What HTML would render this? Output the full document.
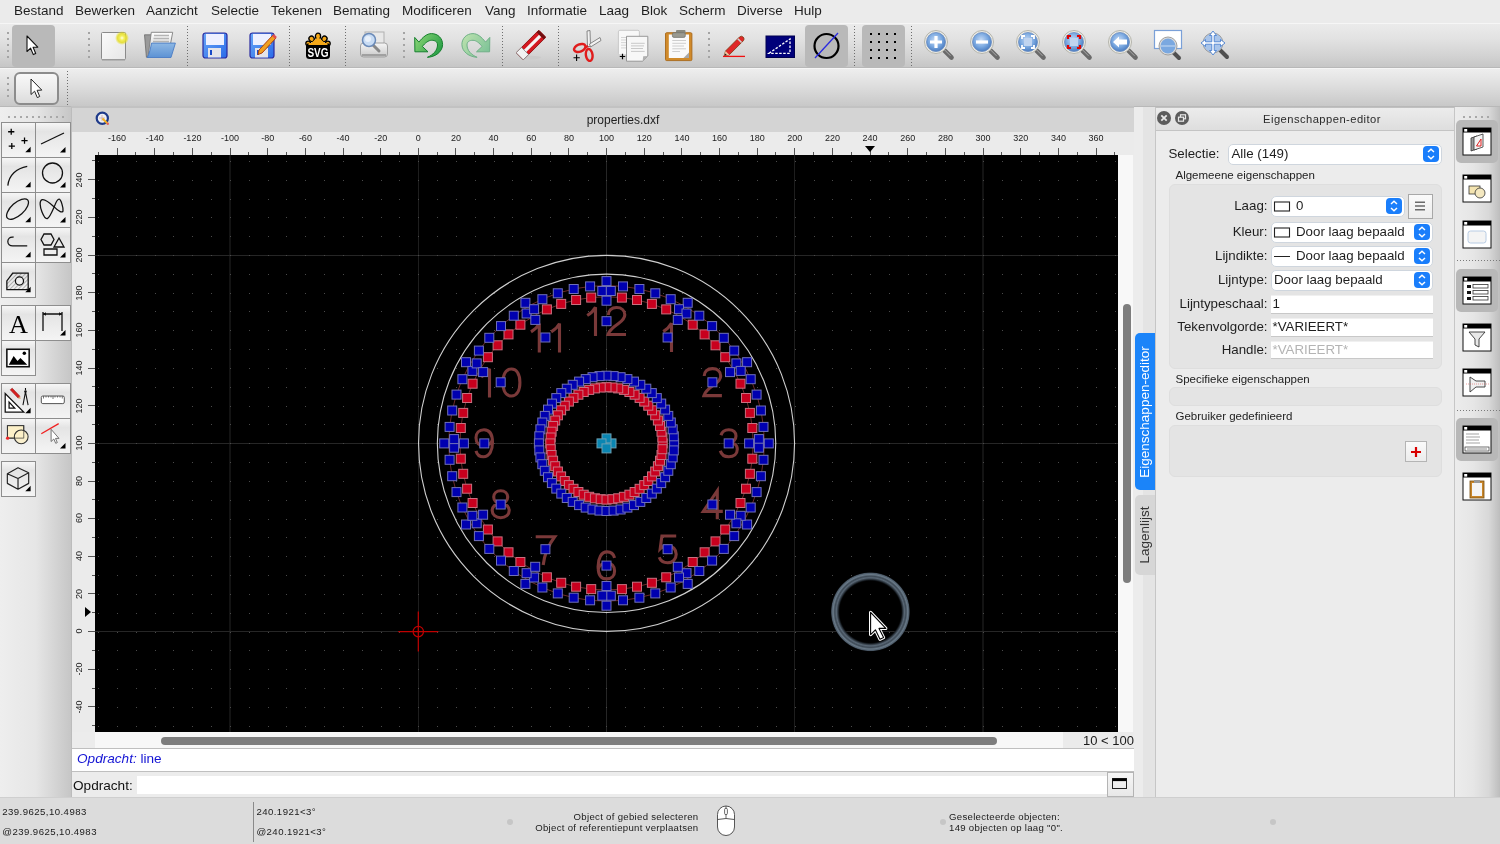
<!DOCTYPE html><html><head><meta charset="utf-8"><style>
*{margin:0;padding:0;box-sizing:border-box}
html,body{width:1500px;height:844px;overflow:hidden;background:#ececec;font-family:"Liberation Sans", sans-serif;color:#1a1a1a}
.a{position:absolute}
.menu span{position:absolute;top:2.7px;font-size:13.5px;line-height:15px;color:#1e1e1e;white-space:nowrap}
.sep{position:absolute;width:1px;border-left:1px dotted #8a8a8a}
.hd{position:absolute;width:3px;background:radial-gradient(circle,#a0a0a0 1px,transparent 1.4px) 0 0/3px 6px repeat-y}
.tb{position:absolute;width:35px;height:35px;border:1px solid #8e8e8e;background:linear-gradient(#fafafa,#e6e6e6 60%,#dcdcdc)}
.tb svg{position:absolute;left:0;top:0}
.tri{position:absolute;right:3px;bottom:3px;width:0;height:0;border-left:7px solid transparent;border-bottom:7px solid #000}
.rl{position:absolute;font-size:9px;color:#222;white-space:nowrap;text-align:center;width:40px}
.lab{position:absolute;font-size:13px;color:#1a1a1a;white-space:nowrap;text-align:right}
</style></head><body><div style="position:absolute;left:0;top:0;width:1500px;height:844px;overflow:hidden;will-change:transform"><div class="a menu" style="left:0;top:0;width:1500px;height:23px;background:#ebebeb"><span style="left:14px">Bestand</span><span style="left:75px">Bewerken</span><span style="left:146px">Aanzicht</span><span style="left:211px">Selectie</span><span style="left:271px">Tekenen</span><span style="left:333px">Bemating</span><span style="left:402px">Modificeren</span><span style="left:485px">Vang</span><span style="left:527px">Informatie</span><span style="left:599px">Laag</span><span style="left:641px">Blok</span><span style="left:679px">Scherm</span><span style="left:737px">Diverse</span><span style="left:794px">Hulp</span></div><div class="a" style="left:0;top:23px;width:1500px;height:45px;background:linear-gradient(#ebebeb,#e2e2e2 35%,#d2d2d2 75%,#c6c6c6);border-top:1px solid #f6f6f6;border-bottom:1px solid #b8b8b8"></div><div class="a" style="left:0;top:68px;width:1500px;height:39px;background:linear-gradient(#eeeeee,#dedede 45%,#c8c8c8);border-top:1px solid #f6f6f6;border-bottom:1px solid #b8b8b8"></div><div class="a" style="left:7px;top:32px;width:2px;height:2px;background:#a4a4a4"></div><div class="a" style="left:7px;top:38px;width:2px;height:2px;background:#a4a4a4"></div><div class="a" style="left:7px;top:44px;width:2px;height:2px;background:#a4a4a4"></div><div class="a" style="left:7px;top:50px;width:2px;height:2px;background:#a4a4a4"></div><div class="a" style="left:7px;top:56px;width:2px;height:2px;background:#a4a4a4"></div><div class="a" style="left:12px;top:25px;width:43px;height:42px;border-radius:4px;background:#b9b9b9"></div><svg class="a" style="left:26px;top:35px;" width="13" height="21" viewBox="0 0 13 21"><path transform="translate(1,1)" d="M0 0 L0 15.5 L3.6 12.2 L6.3 18.6 L8.7 17.5 L6.1 11.3 L10.8 11.1 Z" fill="#fff" stroke="#111" stroke-width="1.1" stroke-linejoin="round"/></svg><div class="a" style="left:88px;top:32px;width:2px;height:2px;background:#a4a4a4"></div><div class="a" style="left:88px;top:38px;width:2px;height:2px;background:#a4a4a4"></div><div class="a" style="left:88px;top:44px;width:2px;height:2px;background:#a4a4a4"></div><div class="a" style="left:88px;top:50px;width:2px;height:2px;background:#a4a4a4"></div><div class="a" style="left:88px;top:56px;width:2px;height:2px;background:#a4a4a4"></div><svg class="a" style="left:99px;top:30px;" width="30" height="32" viewBox="0 0 30 32"><defs><radialGradient id="gl"><stop offset="0" stop-color="#ffffe8"/><stop offset="0.3" stop-color="#f4f060"/><stop offset="0.65" stop-color="#e4dc20" stop-opacity="0.85"/><stop offset="1" stop-color="#e8e010" stop-opacity="0"/></radialGradient><linearGradient id="pg" x1="0" y1="0" x2="1" y2="1"><stop offset="0" stop-color="#fafafa"/><stop offset="1" stop-color="#e6e6e6"/></linearGradient></defs><rect x="2.5" y="2.5" width="24" height="27" rx="1" fill="url(#pg)" stroke="#8a8a8a" stroke-width="1"/><rect x="3" y="29" width="23" height="1.5" fill="#9a9a9a"/><circle cx="23" cy="8" r="7" fill="url(#gl)"/></svg><svg class="a" style="left:142px;top:30px;" width="36" height="31" viewBox="0 0 36 31"><defs><linearGradient id="fg" x1="0" y1="0" x2="0" y2="1"><stop offset="0" stop-color="#8eb8e4"/><stop offset="1" stop-color="#5c92d4"/></linearGradient><linearGradient id="pp" x1="0" y1="0" x2="0" y2="1"><stop offset="0" stop-color="#ffffff"/><stop offset="1" stop-color="#c4c4c4"/></linearGradient></defs><path d="M2.5 4.8 L9.5 4.8 L6.5 27.2 L4.4 27.2 Z" fill="#9a9a9a" stroke="#6a6a6a" stroke-width="0.8"/><path d="M9.3 2.3 L30.7 2.3 L28.6 13.5 L6 27 Z" fill="url(#pp)" stroke="#7e7e7e" stroke-width="0.9"/><path d="M12 5.5 H27 M11.5 8.5 H27 M11 11.5 H27" stroke="#b4b4b4" stroke-width="1.6"/><path d="M9.6 13.1 L33.4 13.1 L29 27.5 L5.2 27.5 C7.5 24 8.5 18 9.6 13.1 Z" fill="url(#fg)" stroke="#4a7cc4" stroke-width="0.9"/></svg><div class="a" style="left:187px;top:26px;width:1px;height:1px;background:#6e6e6e"></div><div class="a" style="left:187px;top:29px;width:1px;height:1px;background:#6e6e6e"></div><div class="a" style="left:187px;top:32px;width:1px;height:1px;background:#6e6e6e"></div><div class="a" style="left:187px;top:35px;width:1px;height:1px;background:#6e6e6e"></div><div class="a" style="left:187px;top:38px;width:1px;height:1px;background:#6e6e6e"></div><div class="a" style="left:187px;top:41px;width:1px;height:1px;background:#6e6e6e"></div><div class="a" style="left:187px;top:44px;width:1px;height:1px;background:#6e6e6e"></div><div class="a" style="left:187px;top:47px;width:1px;height:1px;background:#6e6e6e"></div><div class="a" style="left:187px;top:50px;width:1px;height:1px;background:#6e6e6e"></div><div class="a" style="left:187px;top:53px;width:1px;height:1px;background:#6e6e6e"></div><div class="a" style="left:187px;top:56px;width:1px;height:1px;background:#6e6e6e"></div><div class="a" style="left:187px;top:59px;width:1px;height:1px;background:#6e6e6e"></div><div class="a" style="left:187px;top:62px;width:1px;height:1px;background:#6e6e6e"></div><div class="a" style="left:187px;top:65px;width:1px;height:1px;background:#6e6e6e"></div><svg class="a" style="left:202px;top:32px;" width="27" height="28" viewBox="0 0 27 28"><defs><linearGradient id="fl" x1="0" y1="0" x2="1" y2="1"><stop offset="0" stop-color="#6aa8f8"/><stop offset="1" stop-color="#2a6ae8"/></linearGradient></defs><rect x="1" y="1" width="24" height="25" rx="2.5" fill="url(#fl)" stroke="#2a2aa0" stroke-width="1.2"/><rect x="4" y="2" width="18" height="11" fill="#eef0ff"/><rect x="6" y="16" width="13" height="9.5" fill="#e4e4ea"/><rect x="8" y="18" width="2" height="5" fill="#1a4ac8"/></svg><svg class="a" style="left:248px;top:30px;" width="30" height="30" viewBox="0 0 30 30"><g transform="translate(1,2)"><defs><linearGradient id="fl2" x1="0" y1="0" x2="1" y2="1"><stop offset="0" stop-color="#6aa8f8"/><stop offset="1" stop-color="#2a6ae8"/></linearGradient></defs><rect x="1" y="1" width="24" height="25" rx="2.5" fill="url(#fl2)" stroke="#2a2aa0" stroke-width="1.2"/><rect x="4" y="2" width="18" height="11" fill="#eef0ff"/><rect x="6" y="16" width="13" height="9.5" fill="#e4e4ea"/><rect x="8" y="18" width="2" height="5" fill="#1a4ac8"/></g><path d="M11 20 L25 5 L28 8 L14 23 L10 24.5 Z" fill="#f0a020" stroke="#b04010" stroke-width="1"/><path d="M25 5 L28 8" stroke="#e05050" stroke-width="2.5"/></svg><div class="a" style="left:289px;top:26px;width:1px;height:1px;background:#6e6e6e"></div><div class="a" style="left:289px;top:29px;width:1px;height:1px;background:#6e6e6e"></div><div class="a" style="left:289px;top:32px;width:1px;height:1px;background:#6e6e6e"></div><div class="a" style="left:289px;top:35px;width:1px;height:1px;background:#6e6e6e"></div><div class="a" style="left:289px;top:38px;width:1px;height:1px;background:#6e6e6e"></div><div class="a" style="left:289px;top:41px;width:1px;height:1px;background:#6e6e6e"></div><div class="a" style="left:289px;top:44px;width:1px;height:1px;background:#6e6e6e"></div><div class="a" style="left:289px;top:47px;width:1px;height:1px;background:#6e6e6e"></div><div class="a" style="left:289px;top:50px;width:1px;height:1px;background:#6e6e6e"></div><div class="a" style="left:289px;top:53px;width:1px;height:1px;background:#6e6e6e"></div><div class="a" style="left:289px;top:56px;width:1px;height:1px;background:#6e6e6e"></div><div class="a" style="left:289px;top:59px;width:1px;height:1px;background:#6e6e6e"></div><div class="a" style="left:289px;top:62px;width:1px;height:1px;background:#6e6e6e"></div><div class="a" style="left:289px;top:65px;width:1px;height:1px;background:#6e6e6e"></div><svg class="a" style="left:304px;top:32px;" width="28" height="28" viewBox="0 0 28 28"><g fill="#f4a818" stroke="#000" stroke-width="1.3"><ellipse cx="14" cy="4.2" rx="2.6" ry="3"/><ellipse cx="7.6" cy="6.8" rx="2.5" ry="2.8" transform="rotate(-40 7.6 6.8)"/><ellipse cx="20.4" cy="6.8" rx="2.5" ry="2.8" transform="rotate(40 20.4 6.8)"/><ellipse cx="4.2" cy="11.5" rx="2.4" ry="2.4"/><ellipse cx="23.8" cy="11.5" rx="2.4" ry="2.4"/></g><path d="M6 12 L14 5 L22 12 Z" fill="#f4a818"/><rect x="2" y="11" width="24" height="16" rx="3.5" fill="#000"/><rect x="4.5" y="11" width="19" height="2" fill="#f4a818"/><text x="14" y="25" text-anchor="middle" font-family="Liberation Sans" font-weight="bold" font-size="10" fill="#fff" transform="translate(14 25) scale(1 1.3) translate(-14 -25)">SVG</text></svg><div class="a" style="left:345px;top:26px;width:1px;height:1px;background:#6e6e6e"></div><div class="a" style="left:345px;top:29px;width:1px;height:1px;background:#6e6e6e"></div><div class="a" style="left:345px;top:32px;width:1px;height:1px;background:#6e6e6e"></div><div class="a" style="left:345px;top:35px;width:1px;height:1px;background:#6e6e6e"></div><div class="a" style="left:345px;top:38px;width:1px;height:1px;background:#6e6e6e"></div><div class="a" style="left:345px;top:41px;width:1px;height:1px;background:#6e6e6e"></div><div class="a" style="left:345px;top:44px;width:1px;height:1px;background:#6e6e6e"></div><div class="a" style="left:345px;top:47px;width:1px;height:1px;background:#6e6e6e"></div><div class="a" style="left:345px;top:50px;width:1px;height:1px;background:#6e6e6e"></div><div class="a" style="left:345px;top:53px;width:1px;height:1px;background:#6e6e6e"></div><div class="a" style="left:345px;top:56px;width:1px;height:1px;background:#6e6e6e"></div><div class="a" style="left:345px;top:59px;width:1px;height:1px;background:#6e6e6e"></div><div class="a" style="left:345px;top:62px;width:1px;height:1px;background:#6e6e6e"></div><div class="a" style="left:345px;top:65px;width:1px;height:1px;background:#6e6e6e"></div><svg class="a" style="left:358px;top:30px;" width="32" height="30" viewBox="0 0 32 30"><defs><linearGradient id="pr" x1="0" y1="0" x2="0" y2="1"><stop offset="0" stop-color="#f6f6f6"/><stop offset="1" stop-color="#c8c8c8"/></linearGradient></defs><rect x="7" y="2" width="19" height="14" fill="#e8e8e8" stroke="#b0b0b0" stroke-width="1"/><rect x="2.5" y="13" width="27" height="14" rx="3" fill="url(#pr)" stroke="#a0a0a0" stroke-width="1"/><path d="M4 25 L28 25" stroke="#909090" stroke-width="1.5"/><line x1="14" y1="14" x2="21" y2="21" stroke="#888" stroke-width="3" stroke-linecap="round"/><circle cx="11" cy="10" r="6.5" fill="#c8dcf4" stroke="#6a8ab8" stroke-width="1.5"/><circle cx="10" cy="9" r="3" fill="#e8f0fa"/></svg><div class="a" style="left:403px;top:32px;width:2px;height:2px;background:#a4a4a4"></div><div class="a" style="left:403px;top:38px;width:2px;height:2px;background:#a4a4a4"></div><div class="a" style="left:403px;top:44px;width:2px;height:2px;background:#a4a4a4"></div><div class="a" style="left:403px;top:50px;width:2px;height:2px;background:#a4a4a4"></div><div class="a" style="left:403px;top:56px;width:2px;height:2px;background:#a4a4a4"></div><svg class="a" style="left:413px;top:31px;" width="32" height="28" viewBox="0 0 32 28"><defs><linearGradient id="ug" x1="0" y1="0" x2="1" y2="0.6"><stop offset="0" stop-color="#90d878"/><stop offset="1" stop-color="#2aa048"/></linearGradient></defs><path d="M1.7 6.4 L5.9 11.1 C10 6 14 2.6 18.5 2.6 C25 2.6 29.6 7.5 29.6 13.4 C29.6 21 22 26 14.4 26.3 C20 24 24.5 19.5 24.5 14 C24.5 10.5 22 9.3 18.5 9.3 C15.5 9.3 12 12 9.4 15.5 L15 20.8 L1.9 20.8 Z" fill="url(#ug)" stroke="#16802e" stroke-width="1" stroke-linejoin="round"/></svg><svg class="a" style="left:460px;top:31px;" width="32" height="28" viewBox="0 0 32 28"><defs><linearGradient id="rg2" x1="1" y1="0" x2="0" y2="0.6"><stop offset="0" stop-color="#c0e4b0"/><stop offset="1" stop-color="#80c498"/></linearGradient></defs><g transform="translate(31.5,0) scale(-1,1)"><path d="M1.7 6.4 L5.9 11.1 C10 6 14 2.6 18.5 2.6 C25 2.6 29.6 7.5 29.6 13.4 C29.6 21 22 26 14.4 26.3 C20 24 24.5 19.5 24.5 14 C24.5 10.5 22 9.3 18.5 9.3 C15.5 9.3 12 12 9.4 15.5 L15 20.8 L1.9 20.8 Z" fill="url(#rg2)" stroke="#70b088" stroke-width="1" stroke-linejoin="round"/></g></svg><div class="a" style="left:502px;top:26px;width:1px;height:1px;background:#6e6e6e"></div><div class="a" style="left:502px;top:29px;width:1px;height:1px;background:#6e6e6e"></div><div class="a" style="left:502px;top:32px;width:1px;height:1px;background:#6e6e6e"></div><div class="a" style="left:502px;top:35px;width:1px;height:1px;background:#6e6e6e"></div><div class="a" style="left:502px;top:38px;width:1px;height:1px;background:#6e6e6e"></div><div class="a" style="left:502px;top:41px;width:1px;height:1px;background:#6e6e6e"></div><div class="a" style="left:502px;top:44px;width:1px;height:1px;background:#6e6e6e"></div><div class="a" style="left:502px;top:47px;width:1px;height:1px;background:#6e6e6e"></div><div class="a" style="left:502px;top:50px;width:1px;height:1px;background:#6e6e6e"></div><div class="a" style="left:502px;top:53px;width:1px;height:1px;background:#6e6e6e"></div><div class="a" style="left:502px;top:56px;width:1px;height:1px;background:#6e6e6e"></div><div class="a" style="left:502px;top:59px;width:1px;height:1px;background:#6e6e6e"></div><div class="a" style="left:502px;top:62px;width:1px;height:1px;background:#6e6e6e"></div><div class="a" style="left:502px;top:65px;width:1px;height:1px;background:#6e6e6e"></div><svg class="a" style="left:516px;top:30px;" width="30" height="32" viewBox="0 0 30 32"><ellipse cx="14" cy="27.5" rx="11" ry="1.8" fill="#c8c8c8" opacity="0.8"/><g transform="translate(15,15) rotate(-45)"><rect x="-16" y="-5" width="32" height="10" rx="1" fill="#d41820" stroke="#8a1010" stroke-width="0.8"/><rect x="-9" y="-1.6" width="22" height="3.2" fill="#f4f4f4"/><rect x="-16" y="-5" width="7.5" height="10" fill="#f2f2f2" stroke="#8a8a8a" stroke-width="0.8"/><rect x="13" y="-5" width="3" height="10" fill="#701010"/></g></svg><div class="a" style="left:558px;top:26px;width:1px;height:1px;background:#6e6e6e"></div><div class="a" style="left:558px;top:29px;width:1px;height:1px;background:#6e6e6e"></div><div class="a" style="left:558px;top:32px;width:1px;height:1px;background:#6e6e6e"></div><div class="a" style="left:558px;top:35px;width:1px;height:1px;background:#6e6e6e"></div><div class="a" style="left:558px;top:38px;width:1px;height:1px;background:#6e6e6e"></div><div class="a" style="left:558px;top:41px;width:1px;height:1px;background:#6e6e6e"></div><div class="a" style="left:558px;top:44px;width:1px;height:1px;background:#6e6e6e"></div><div class="a" style="left:558px;top:47px;width:1px;height:1px;background:#6e6e6e"></div><div class="a" style="left:558px;top:50px;width:1px;height:1px;background:#6e6e6e"></div><div class="a" style="left:558px;top:53px;width:1px;height:1px;background:#6e6e6e"></div><div class="a" style="left:558px;top:56px;width:1px;height:1px;background:#6e6e6e"></div><div class="a" style="left:558px;top:59px;width:1px;height:1px;background:#6e6e6e"></div><div class="a" style="left:558px;top:62px;width:1px;height:1px;background:#6e6e6e"></div><div class="a" style="left:558px;top:65px;width:1px;height:1px;background:#6e6e6e"></div><svg class="a" style="left:571px;top:28px;" width="32" height="34" viewBox="0 0 32 34"><path d="M16 3 L19 2.5 L19.5 18.5 L16.5 18.5 Z" fill="#f2f2f2" stroke="#7a7a7a" stroke-width="0.9" stroke-linejoin="round"/><path d="M18.5 16 L29 9.5 L30 12.5 L19.5 19 Z" fill="#f2f2f2" stroke="#7a7a7a" stroke-width="0.9" stroke-linejoin="round"/><ellipse cx="8.8" cy="20" rx="6" ry="3.6" fill="none" stroke="#e01c1c" stroke-width="2.4" transform="rotate(-22 8.8 20)"/><ellipse cx="18.2" cy="27" rx="3.3" ry="6" fill="none" stroke="#e01c1c" stroke-width="2.4" transform="rotate(-8 18.2 27)"/><path d="M13.5 20 L17 18" stroke="#e01c1c" stroke-width="2.4"/><path d="M2.5 29.8 L8.8 29.8 M5.6 26.6 L5.6 33" stroke="#000" stroke-width="1.1"/></svg><svg class="a" style="left:616px;top:28px;" width="34" height="36" viewBox="0 0 34 36"><rect x="2.4" y="2.3" width="21" height="24.6" rx="1.5" fill="#f8f8f8" stroke="#c4c4c4" stroke-width="0.9"/><path d="M5 9.5 H12 M5 12 H12 M5 14.6 H12 M5 17.2 H12 M5 19.9 H12" stroke="#d0d0d0" stroke-width="0.9"/><path d="M10.5 8.3 H31.8 V28 L26.6 33.2 H10.5 Z" fill="#f7f7f7" stroke="#8e8e8e" stroke-width="0.9" stroke-linejoin="round"/><path d="M26.6 33.2 L27.2 28.3 L31.8 28 Z" fill="#b0b0b0"/><path d="M15 15.3 H28.7 M15 17.9 H28 M15 20.5 H27 M15 23.4 H28.7" stroke="#c8c8c8" stroke-width="1"/><path d="M3.8 28.5 H9.2 M6.5 25.8 V31.2" stroke="#000" stroke-width="1.2"/></svg><svg class="a" style="left:663px;top:27px;" width="32" height="36" viewBox="0 0 32 36"><rect x="2.5" y="5.7" width="26.4" height="27.9" rx="1.2" fill="#d08a2a" stroke="#a86818" stroke-width="0.9"/><rect x="5.8" y="7.5" width="20.2" height="23.5" fill="#fafafa"/><path d="M9.3 13.5 H23 M9.3 16.3 H23 M9.3 19 H21 M9.3 21.8 H23 M9.3 24.5 H17" stroke="#c8c8c8" stroke-width="0.9"/><path d="M20.5 31 L26 25.5 V31 Z" fill="#a8a8a8"/><rect x="13" y="3" width="9.5" height="4" rx="1" fill="#8a8a80"/><rect x="9.4" y="5.7" width="12.9" height="4.7" rx="1.5" fill="#9a9a90" stroke="#707068" stroke-width="0.7"/></svg><div class="a" style="left:708px;top:32px;width:2px;height:2px;background:#a4a4a4"></div><div class="a" style="left:708px;top:38px;width:2px;height:2px;background:#a4a4a4"></div><div class="a" style="left:708px;top:44px;width:2px;height:2px;background:#a4a4a4"></div><div class="a" style="left:708px;top:50px;width:2px;height:2px;background:#a4a4a4"></div><div class="a" style="left:708px;top:56px;width:2px;height:2px;background:#a4a4a4"></div><svg class="a" style="left:721px;top:32px;" width="26" height="28" viewBox="0 0 26 28"><path d="M4.5 19 L18.5 5 Q20.5 3.3 22.3 5.2 Q24 7 22.3 8.8 L8.3 22.8 L3.3 24 Z" fill="#e02828" stroke="#7a3a10" stroke-width="0.8"/><path d="M16.8 6.7 L20.6 10.5" stroke="#d0d0d0" stroke-width="1.6"/><path d="M4.5 19 L8.3 22.8 L3.3 24 Z" fill="#f0c8a0"/><path d="M3.3 24 L4.2 21.4 L5.9 23.1 Z" fill="#202020"/><path d="M2 24.4 L24 24.4" stroke="#f01010" stroke-width="1.3"/></svg><svg class="a" style="left:765px;top:35px;" width="32" height="25" viewBox="0 0 32 25"><rect x="1" y="1" width="28.5" height="21.5" fill="#00007a" stroke="#000050" stroke-width="1"/><path d="M4 18.3 L25 4 L25 18.3 Z" fill="none" stroke="#fff" stroke-width="1.3" stroke-dasharray="2.5,1.5"/></svg><div class="a" style="left:805px;top:25px;width:43px;height:42px;border-radius:4px;background:#b9b9b9"></div><svg class="a" style="left:809px;top:30px;" width="36" height="32" viewBox="0 0 36 32"><circle cx="17.5" cy="16" r="12" fill="none" stroke="#000" stroke-width="2.2"/><line x1="6" y1="28" x2="29" y2="3" stroke="#2a2ae0" stroke-width="1.3"/></svg><div class="a" style="left:854px;top:26px;width:1px;height:1px;background:#6e6e6e"></div><div class="a" style="left:854px;top:29px;width:1px;height:1px;background:#6e6e6e"></div><div class="a" style="left:854px;top:32px;width:1px;height:1px;background:#6e6e6e"></div><div class="a" style="left:854px;top:35px;width:1px;height:1px;background:#6e6e6e"></div><div class="a" style="left:854px;top:38px;width:1px;height:1px;background:#6e6e6e"></div><div class="a" style="left:854px;top:41px;width:1px;height:1px;background:#6e6e6e"></div><div class="a" style="left:854px;top:44px;width:1px;height:1px;background:#6e6e6e"></div><div class="a" style="left:854px;top:47px;width:1px;height:1px;background:#6e6e6e"></div><div class="a" style="left:854px;top:50px;width:1px;height:1px;background:#6e6e6e"></div><div class="a" style="left:854px;top:53px;width:1px;height:1px;background:#6e6e6e"></div><div class="a" style="left:854px;top:56px;width:1px;height:1px;background:#6e6e6e"></div><div class="a" style="left:854px;top:59px;width:1px;height:1px;background:#6e6e6e"></div><div class="a" style="left:854px;top:62px;width:1px;height:1px;background:#6e6e6e"></div><div class="a" style="left:854px;top:65px;width:1px;height:1px;background:#6e6e6e"></div><div class="a" style="left:862px;top:25px;width:43px;height:42px;border-radius:4px;background:#b9b9b9"></div><div class="a" style="left:870px;top:33px;width:2px;height:2px;background:#000"></div><div class="a" style="left:870px;top:41px;width:2px;height:2px;background:#000"></div><div class="a" style="left:870px;top:49px;width:2px;height:2px;background:#000"></div><div class="a" style="left:870px;top:57px;width:2px;height:2px;background:#000"></div><div class="a" style="left:878px;top:33px;width:2px;height:2px;background:#000"></div><div class="a" style="left:878px;top:41px;width:2px;height:2px;background:#000"></div><div class="a" style="left:878px;top:49px;width:2px;height:2px;background:#000"></div><div class="a" style="left:878px;top:57px;width:2px;height:2px;background:#000"></div><div class="a" style="left:886px;top:33px;width:2px;height:2px;background:#000"></div><div class="a" style="left:886px;top:41px;width:2px;height:2px;background:#000"></div><div class="a" style="left:886px;top:49px;width:2px;height:2px;background:#000"></div><div class="a" style="left:886px;top:57px;width:2px;height:2px;background:#000"></div><div class="a" style="left:894px;top:33px;width:2px;height:2px;background:#000"></div><div class="a" style="left:894px;top:41px;width:2px;height:2px;background:#000"></div><div class="a" style="left:894px;top:49px;width:2px;height:2px;background:#000"></div><div class="a" style="left:894px;top:57px;width:2px;height:2px;background:#000"></div><div class="a" style="left:911px;top:26px;width:1px;height:1px;background:#6e6e6e"></div><div class="a" style="left:911px;top:29px;width:1px;height:1px;background:#6e6e6e"></div><div class="a" style="left:911px;top:32px;width:1px;height:1px;background:#6e6e6e"></div><div class="a" style="left:911px;top:35px;width:1px;height:1px;background:#6e6e6e"></div><div class="a" style="left:911px;top:38px;width:1px;height:1px;background:#6e6e6e"></div><div class="a" style="left:911px;top:41px;width:1px;height:1px;background:#6e6e6e"></div><div class="a" style="left:911px;top:44px;width:1px;height:1px;background:#6e6e6e"></div><div class="a" style="left:911px;top:47px;width:1px;height:1px;background:#6e6e6e"></div><div class="a" style="left:911px;top:50px;width:1px;height:1px;background:#6e6e6e"></div><div class="a" style="left:911px;top:53px;width:1px;height:1px;background:#6e6e6e"></div><div class="a" style="left:911px;top:56px;width:1px;height:1px;background:#6e6e6e"></div><div class="a" style="left:911px;top:59px;width:1px;height:1px;background:#6e6e6e"></div><div class="a" style="left:911px;top:62px;width:1px;height:1px;background:#6e6e6e"></div><div class="a" style="left:911px;top:65px;width:1px;height:1px;background:#6e6e6e"></div><svg class="a" style="left:922px;top:28px;" width="34" height="34" viewBox="0 0 34 34"><defs><radialGradient id="mg936" cx="45%" cy="40%" r="60%"><stop offset="0" stop-color="#c8dcf6"/><stop offset="0.6" stop-color="#7aa8e0"/><stop offset="1" stop-color="#4a7cc0"/></radialGradient></defs><line x1="21" y1="21" x2="29.5" y2="29.5" stroke="#6a6a6a" stroke-width="4.6" stroke-linecap="round"/><line x1="22.5" y1="21.8" x2="28.5" y2="27.8" stroke="#a8a8a8" stroke-width="1"/><circle cx="14" cy="14" r="11.5" fill="#ecebe4" stroke="#b4b4ac" stroke-width="1"/><circle cx="14" cy="14" r="9.5" fill="url(#mg936)" stroke="#6a8cc0" stroke-width="0.8"/><path d="M14 8 V20 M8 14 H20" stroke="#fff" stroke-width="3.2"/></svg><svg class="a" style="left:968px;top:28px;" width="34" height="34" viewBox="0 0 34 34"><defs><radialGradient id="mg982" cx="45%" cy="40%" r="60%"><stop offset="0" stop-color="#c8dcf6"/><stop offset="0.6" stop-color="#7aa8e0"/><stop offset="1" stop-color="#4a7cc0"/></radialGradient></defs><line x1="21" y1="21" x2="29.5" y2="29.5" stroke="#6a6a6a" stroke-width="4.6" stroke-linecap="round"/><line x1="22.5" y1="21.8" x2="28.5" y2="27.8" stroke="#a8a8a8" stroke-width="1"/><circle cx="14" cy="14" r="11.5" fill="#ecebe4" stroke="#b4b4ac" stroke-width="1"/><circle cx="14" cy="14" r="9.5" fill="url(#mg982)" stroke="#6a8cc0" stroke-width="0.8"/><path d="M8 14 H20" stroke="#fff" stroke-width="3.2"/></svg><svg class="a" style="left:1014px;top:28px;" width="34" height="34" viewBox="0 0 34 34"><defs><radialGradient id="mg1028" cx="45%" cy="40%" r="60%"><stop offset="0" stop-color="#c8dcf6"/><stop offset="0.6" stop-color="#7aa8e0"/><stop offset="1" stop-color="#4a7cc0"/></radialGradient></defs><line x1="21" y1="21" x2="29.5" y2="29.5" stroke="#6a6a6a" stroke-width="4.6" stroke-linecap="round"/><line x1="22.5" y1="21.8" x2="28.5" y2="27.8" stroke="#a8a8a8" stroke-width="1"/><circle cx="14" cy="14" r="11.5" fill="#ecebe4" stroke="#b4b4ac" stroke-width="1"/><circle cx="14" cy="14" r="9.5" fill="url(#mg1028)" stroke="#6a8cc0" stroke-width="0.8"/><rect x="10" y="10" width="8" height="8" fill="#c0d4f0"/><path d="M8 11 V8 H11 M17 8 H20 V11 M20 17 V20 H17 M11 20 H8 V17" fill="none" stroke="#fff" stroke-width="1.8"/></svg><svg class="a" style="left:1060px;top:28px;" width="34" height="34" viewBox="0 0 34 34"><defs><radialGradient id="mg1074" cx="45%" cy="40%" r="60%"><stop offset="0" stop-color="#c8dcf6"/><stop offset="0.6" stop-color="#7aa8e0"/><stop offset="1" stop-color="#4a7cc0"/></radialGradient></defs><line x1="21" y1="21" x2="29.5" y2="29.5" stroke="#6a6a6a" stroke-width="4.6" stroke-linecap="round"/><line x1="22.5" y1="21.8" x2="28.5" y2="27.8" stroke="#a8a8a8" stroke-width="1"/><circle cx="14" cy="14" r="11.5" fill="#ecebe4" stroke="#b4b4ac" stroke-width="1"/><circle cx="14" cy="14" r="9.5" fill="url(#mg1074)" stroke="#6a8cc0" stroke-width="0.8"/><rect x="10" y="10" width="8" height="8" fill="#c0d4f0"/><path d="M8 11 V8 H11 M17 8 H20 V11 M20 17 V20 H17 M11 20 H8 V17" fill="none" stroke="#e00000" stroke-width="2.2"/></svg><svg class="a" style="left:1106px;top:28px;" width="34" height="34" viewBox="0 0 34 34"><defs><radialGradient id="mg1120" cx="45%" cy="40%" r="60%"><stop offset="0" stop-color="#c8dcf6"/><stop offset="0.6" stop-color="#7aa8e0"/><stop offset="1" stop-color="#4a7cc0"/></radialGradient></defs><line x1="21" y1="21" x2="29.5" y2="29.5" stroke="#6a6a6a" stroke-width="4.6" stroke-linecap="round"/><line x1="22.5" y1="21.8" x2="28.5" y2="27.8" stroke="#a8a8a8" stroke-width="1"/><circle cx="14" cy="14" r="11.5" fill="#ecebe4" stroke="#b4b4ac" stroke-width="1"/><circle cx="14" cy="14" r="9.5" fill="url(#mg1120)" stroke="#6a8cc0" stroke-width="0.8"/><path d="M7 14 L13 8.5 V11.5 H21 V16.5 H13 V19.5 Z" fill="#fff"/></svg><svg class="a" style="left:1152px;top:28px;" width="34" height="34" viewBox="0 0 34 34"><rect x="2.5" y="2.5" width="27" height="18" fill="#fff" stroke="#7aa0d8" stroke-width="1.2"/><line x1="20" y1="23" x2="27" y2="30" stroke="#505050" stroke-width="4" stroke-linecap="round"/><circle cx="16" cy="18" r="9" fill="#dcdcdc" stroke="#a0a0a0"/><circle cx="16" cy="18" r="7.5" fill="#7aa8e0"/><path d="M9 18 H23" stroke="#c8dcf4" stroke-width="1"/></svg><svg class="a" style="left:1198px;top:28px;" width="34" height="34" viewBox="0 0 34 34"><line x1="21" y1="21" x2="29" y2="29" stroke="#505050" stroke-width="4" stroke-linecap="round"/><circle cx="15" cy="15" r="10" fill="#a8c4ea" stroke="#a0a0a0"/><path d="M15 3 L11.5 7.5 H13.8 V13.8 H7.5 V11.5 L3 15 L7.5 18.5 V16.2 H13.8 V22.5 H11.5 L15 27 L18.5 22.5 H16.2 V16.2 H22.5 V18.5 L27 15 L22.5 11.5 V13.8 H16.2 V7.5 H18.5 Z" fill="#fff" stroke="#4a80d0" stroke-width="0.9"/></svg><div class="a" style="left:7px;top:77px;width:2px;height:2px;background:#a4a4a4"></div><div class="a" style="left:7px;top:83px;width:2px;height:2px;background:#a4a4a4"></div><div class="a" style="left:7px;top:89px;width:2px;height:2px;background:#a4a4a4"></div><div class="a" style="left:7px;top:95px;width:2px;height:2px;background:#a4a4a4"></div><div class="a" style="left:14px;top:72px;width:45px;height:33px;border-radius:6px;border:2px solid #8c8c8c;background:linear-gradient(#f8f8f8,#ececec 50%,#dcdcdc)"></div><svg class="a" style="left:30px;top:78px;" width="13" height="21" viewBox="0 0 13 21"><path transform="translate(1,1)" d="M0 0 L0 15.5 L3.6 12.2 L6.3 18.6 L8.7 17.5 L6.1 11.3 L10.8 11.1 Z" fill="#fff" stroke="#222" stroke-width="1" stroke-linejoin="round"/></svg><div class="a" style="left:67px;top:71px;width:1px;height:1px;background:#6e6e6e"></div><div class="a" style="left:67px;top:74px;width:1px;height:1px;background:#6e6e6e"></div><div class="a" style="left:67px;top:77px;width:1px;height:1px;background:#6e6e6e"></div><div class="a" style="left:67px;top:80px;width:1px;height:1px;background:#6e6e6e"></div><div class="a" style="left:67px;top:83px;width:1px;height:1px;background:#6e6e6e"></div><div class="a" style="left:67px;top:86px;width:1px;height:1px;background:#6e6e6e"></div><div class="a" style="left:67px;top:89px;width:1px;height:1px;background:#6e6e6e"></div><div class="a" style="left:67px;top:92px;width:1px;height:1px;background:#6e6e6e"></div><div class="a" style="left:67px;top:95px;width:1px;height:1px;background:#6e6e6e"></div><div class="a" style="left:67px;top:98px;width:1px;height:1px;background:#6e6e6e"></div><div class="a" style="left:67px;top:101px;width:1px;height:1px;background:#6e6e6e"></div><div class="a" style="left:67px;top:104px;width:1px;height:1px;background:#6e6e6e"></div><div class="a" style="left:0;top:107px;width:71px;height:690px;background:linear-gradient(90deg,#eeeeee,#e6e6e6 50%,#c6c6c6)"></div><div class="a" style="left:8px;top:116px;width:2px;height:2px;background:#a8a8a8"></div><div class="a" style="left:14px;top:116px;width:2px;height:2px;background:#a8a8a8"></div><div class="a" style="left:20px;top:116px;width:2px;height:2px;background:#a8a8a8"></div><div class="a" style="left:26px;top:116px;width:2px;height:2px;background:#a8a8a8"></div><div class="a" style="left:32px;top:116px;width:2px;height:2px;background:#a8a8a8"></div><div class="a" style="left:38px;top:116px;width:2px;height:2px;background:#a8a8a8"></div><div class="a" style="left:44px;top:116px;width:2px;height:2px;background:#a8a8a8"></div><div class="a" style="left:50px;top:116px;width:2px;height:2px;background:#a8a8a8"></div><div class="a" style="left:56px;top:116px;width:2px;height:2px;background:#a8a8a8"></div><div class="a" style="left:62px;top:116px;width:2px;height:2px;background:#a8a8a8"></div><div class="a" style="left:1px;top:122px;width:35px;height:36px;border:1px solid #8e8e8e;background:linear-gradient(#f6f6f6,#e4e4e4 25%,#ececec 60%,#f4f4f4)"><svg class="a" style="left:0;top:0" width="33" height="34" viewBox="0 0 34 34"><path d="M6.3 8.5 H12.7 M9.5 5.3 V11.7 M20 17.6 H26.4 M23.2 14.4 V20.8 M6.9 23.2 H13.3 M10.1 20 V26.4" stroke="#000" stroke-width="1.3"/><path d="M24 29.5 L29.5 24 L29.5 29.5 Z" fill="#000"/></svg></div><div class="a" style="left:35px;top:122px;width:36px;height:36px;border:1px solid #8e8e8e;background:linear-gradient(#f6f6f6,#e4e4e4 25%,#ececec 60%,#f4f4f4)"><svg class="a" style="left:0;top:0" width="34" height="34" viewBox="0 0 34 34"><path d="M5 21 L28 10" stroke="#111" fill="none" stroke-width="1.3"/><path d="M24 29.5 L29.5 24 L29.5 29.5 Z" fill="#000"/></svg></div><div class="a" style="left:1px;top:157px;width:35px;height:36px;border:1px solid #8e8e8e;background:linear-gradient(#f6f6f6,#e4e4e4 25%,#ececec 60%,#f4f4f4)"><svg class="a" style="left:0;top:0" width="33" height="34" viewBox="0 0 34 34"><path d="M6 28 C7 17 15 10 26 8" stroke="#111" fill="none" stroke-width="1.3"/><path d="M24 29.5 L29.5 24 L29.5 29.5 Z" fill="#000"/></svg></div><div class="a" style="left:35px;top:157px;width:36px;height:36px;border:1px solid #8e8e8e;background:linear-gradient(#f6f6f6,#e4e4e4 25%,#ececec 60%,#f4f4f4)"><svg class="a" style="left:0;top:0" width="34" height="34" viewBox="0 0 34 34"><circle cx="16.5" cy="15" r="10" stroke="#111" fill="none" stroke-width="1.3"/><path d="M24 29.5 L29.5 24 L29.5 29.5 Z" fill="#000"/></svg></div><div class="a" style="left:1px;top:192px;width:35px;height:36px;border:1px solid #8e8e8e;background:linear-gradient(#f6f6f6,#e4e4e4 25%,#ececec 60%,#f4f4f4)"><svg class="a" style="left:0;top:0" width="33" height="34" viewBox="0 0 34 34"><ellipse cx="16" cy="16" rx="14" ry="6.5" transform="rotate(-42 16 16)" stroke="#111" fill="none" stroke-width="1.3"/><path d="M24 29.5 L29.5 24 L29.5 29.5 Z" fill="#000"/></svg></div><div class="a" style="left:35px;top:192px;width:36px;height:36px;border:1px solid #8e8e8e;background:linear-gradient(#f6f6f6,#e4e4e4 25%,#ececec 60%,#f4f4f4)"><svg class="a" style="left:0;top:0" width="34" height="34" viewBox="0 0 34 34"><path d="M18.2 13.9 C14 10 9 6 6.3 6.6 C3 7.5 4 14 6 19 C8 24 10 26 11.4 25.5 C13.5 25 16 19 18.2 13.9 C20 9 22 6 23.2 6.2 C25 6.5 27.5 15 27 18 C26.5 20 23 19 18.2 13.9 Z" stroke="#111" fill="none" stroke-width="1.3"/><path d="M24 29.5 L29.5 24 L29.5 29.5 Z" fill="#000"/></svg></div><div class="a" style="left:1px;top:227px;width:35px;height:36px;border:1px solid #8e8e8e;background:linear-gradient(#f6f6f6,#e4e4e4 25%,#ececec 60%,#f4f4f4)"><svg class="a" style="left:0;top:0" width="33" height="34" viewBox="0 0 34 34"><path d="M12 9 C8 8 6 11 6 13.5 C6 16 8 18 11 18 L26 18" stroke="#111" fill="none" stroke-width="1.3"/><path d="M24 29.5 L29.5 24 L29.5 29.5 Z" fill="#000"/></svg></div><div class="a" style="left:35px;top:227px;width:36px;height:36px;border:1px solid #8e8e8e;background:linear-gradient(#f6f6f6,#e4e4e4 25%,#ececec 60%,#f4f4f4)"><svg class="a" style="left:0;top:0" width="34" height="34" viewBox="0 0 34 34"><path d="M8 6 H15 L18 11.5 L15 17 H8 L5 11.5 Z M23 10 L28 19 H18 Z M8 21 H21 V27 H8 Z" stroke="#111" fill="none" stroke-width="1.3"/><path d="M24 29.5 L29.5 24 L29.5 29.5 Z" fill="#000"/></svg></div><div class="a" style="left:1px;top:262px;width:35px;height:36px;border:1px solid #8e8e8e;background:linear-gradient(#f6f6f6,#e4e4e4 25%,#ececec 60%,#f4f4f4)"><svg class="a" style="left:0;top:0" width="33" height="34" viewBox="0 0 34 34"><defs><pattern id="ht" width="3" height="3" patternUnits="userSpaceOnUse" patternTransform="rotate(45)"><line x1="0" y1="0" x2="0" y2="3" stroke="#555" stroke-width="0.8"/></pattern></defs><path d="M5 27 L5 18 L11 10 L27 10 L27 27 Z" fill="url(#ht)" stroke="#111" stroke-width="1.3"/><circle cx="18" cy="18" r="4.2" fill="#eee" stroke="#111" stroke-width="1.3"/><path d="M24 29.5 L29.5 24 L29.5 29.5 Z" fill="#000"/></svg></div><div class="a" style="left:1px;top:305px;width:35px;height:36px;border:1px solid #8e8e8e;background:linear-gradient(#f6f6f6,#e4e4e4 25%,#ececec 60%,#f4f4f4)"><svg class="a" style="left:0;top:0" width="33" height="34" viewBox="0 0 34 34"><text x="17" y="27" text-anchor="middle" font-family="Liberation Serif" font-size="27" fill="#000">A</text></svg></div><div class="a" style="left:35px;top:305px;width:36px;height:36px;border:1px solid #8e8e8e;background:linear-gradient(#f6f6f6,#e4e4e4 25%,#ececec 60%,#f4f4f4)"><svg class="a" style="left:0;top:0" width="34" height="34" viewBox="0 0 34 34"><path d="M7 8 H26 M7 6 V25 M26 6 V25" stroke="#111" fill="none" stroke-width="1.3"/><path d="M7 8 L10 6.3 V9.7 Z M26 8 L23 6.3 V9.7 Z" fill="#111"/><path d="M24 29.5 L29.5 24 L29.5 29.5 Z" fill="#000"/></svg></div><div class="a" style="left:1px;top:340px;width:35px;height:36px;border:1px solid #8e8e8e;background:linear-gradient(#f6f6f6,#e4e4e4 25%,#ececec 60%,#f4f4f4)"><svg class="a" style="left:0;top:0" width="33" height="34" viewBox="0 0 34 34"><rect x="5" y="8" width="23" height="18" fill="#fff" stroke="#111" stroke-width="1.6"/><path d="M7 24 L12 15 L16 20 L19 17 L26 24 Z" fill="#000"/><circle cx="23" cy="12" r="1.8" fill="#000"/></svg></div><div class="a" style="left:1px;top:383px;width:35px;height:36px;border:1px solid #8e8e8e;background:linear-gradient(#f6f6f6,#e4e4e4 25%,#ececec 60%,#f4f4f4)"><svg class="a" style="left:0;top:0" width="33" height="34" viewBox="0 0 34 34"><path d="M3.3 9.3 V28.4 H22.4 Z M7.3 18.2 V24.4 H13.1 Z" fill="#fff" stroke="#111" stroke-width="1.3" stroke-linejoin="miter"/><path d="M8.5 5.5 L10.5 3.8 L18.5 12.2 L16.6 14 Z" fill="#d82020" stroke="#901010" stroke-width="0.6"/><path d="M16.6 14 L18.5 12.2 L19.3 15 Z" fill="#e0a060"/><path d="M24.2 3.5 V6 M24.2 7.5 L21.6 21.3 M24.2 7.5 L26.9 21.3" stroke="#111" stroke-width="1.1" fill="none"/><circle cx="24.2" cy="7.1" r="1.3" fill="#111"/><path d="M24 29.5 L29.5 24 L29.5 29.5 Z" fill="#000"/></svg></div><div class="a" style="left:35px;top:383px;width:36px;height:36px;border:1px solid #8e8e8e;background:linear-gradient(#f6f6f6,#e4e4e4 25%,#ececec 60%,#f4f4f4)"><svg class="a" style="left:0;top:0" width="34" height="34" viewBox="0 0 34 34"><rect x="5.3" y="12" width="23" height="7.6" rx="1.5" fill="#fff" stroke="#555" stroke-width="1"/><path d="M7.5 12 V14.5 M10 12 V13.5 M12.5 12 V13.5 M15 12 V13.5 M17 12 V15 M19 12 V13.5 M21.5 12 V13.5 M24 12 V13.5 M26.3 12 V14.5" stroke="#555" stroke-width="0.8"/></svg></div><div class="a" style="left:1px;top:418px;width:35px;height:36px;border:1px solid #8e8e8e;background:linear-gradient(#f6f6f6,#e4e4e4 25%,#ececec 60%,#f4f4f4)"><svg class="a" style="left:0;top:0" width="33" height="34" viewBox="0 0 34 34"><rect x="5.6" y="6.3" width="16.8" height="12.9" fill="#fcf0c8" stroke="#333" stroke-width="1.1"/><circle cx="19.8" cy="17.9" r="7.1" fill="#fcf0c8" fill-opacity="0.85" stroke="#333" stroke-width="1.1"/><path d="M5.6 19.2 H22.4 V6.3" fill="none" stroke="#333" stroke-width="1" opacity="0.6"/><circle cx="5.8" cy="19.2" r="1.7" fill="#f02828"/></svg></div><div class="a" style="left:35px;top:418px;width:36px;height:36px;border:1px solid #8e8e8e;background:linear-gradient(#f6f6f6,#e4e4e4 25%,#ececec 60%,#f4f4f4)"><svg class="a" style="left:0;top:0" width="34" height="34" viewBox="0 0 34 34"><path d="M5.3 14.8 L22.7 4.6" stroke="#f02020" stroke-width="1.3"/><path d="M15.1 10.3 V22.5 L17.8 20 L19.7 24.3 L21.3 23.6 L19.5 19.4 L23 19.4 Z" fill="#fff" stroke="#666" stroke-width="0.9" stroke-linejoin="round"/><path d="M24 29.5 L29.5 24 L29.5 29.5 Z" fill="#000"/></svg></div><div class="a" style="left:1px;top:461px;width:35px;height:36px;border:1px solid #8e8e8e;background:linear-gradient(#f6f6f6,#e4e4e4 25%,#ececec 60%,#f4f4f4)"><svg class="a" style="left:0;top:0" width="33" height="34" viewBox="0 0 34 34"><path d="M5.5 11.5 L16.5 5.5 L27.5 10.5 L16.5 16.5 Z M5.5 11.5 V21.5 L16.5 27.5 V16.5 M16.5 27.5 L27.5 21.5 V10.5" fill="none" stroke="#222" stroke-width="1.2" stroke-linejoin="round"/><path d="M24 29.5 L29.5 24 L29.5 29.5 Z" fill="#000"/></svg></div><div class="a" style="left:71px;top:106px;width:1063px;height:691px;background:#ececec;border-left:1px solid #bcbcbc;border-top:2px solid #c2c2c2"></div><div class="a" style="left:72px;top:108px;width:1062px;height:24px;background:#d4d4d4"></div><div class="a" style="left:0;top:112.5px;width:1246px;text-align:center;font-size:12px;line-height:14px;color:#1e1e1e">properties.dxf</div><svg class="a" style="left:95px;top:111px;" width="15" height="15" viewBox="0 0 15 15"><circle cx="7.3" cy="7.3" r="5.6" fill="#eef0f4" stroke="#1e3a8a" stroke-width="2.2"/><path d="M4 7 H10 M7 4 V10" stroke="#c8a0a0" stroke-width="0.7"/><path d="M7.5 7.5 L12.5 12.5" stroke="#f0b020" stroke-width="2"/><circle cx="12.8" cy="12.8" r="1.2" fill="#e06060"/></svg><div class="a" style="left:72px;top:132px;width:1062px;height:23px;background:#ebebeb"></div><div class="a" style="left:72px;top:155px;width:23px;height:577px;background:#ebebeb"></div><div class="a" style="left:1118px;top:155px;width:15px;height:577px;background:#f8f8f8"></div><div class="a" style="left:1123px;top:303.5px;width:7.8px;height:279px;border-radius:4px;background:#7d7d7d"></div><div class="a" style="left:95px;top:732px;width:968px;height:16px;background:#f7f7f7"></div><div class="a" style="left:1063px;top:732px;width:71px;height:16px;background:#ebebeb"></div><div class="a" style="left:161px;top:737px;width:836px;height:8px;border-radius:4px;background:#7d7d7d"></div><div class="lab" style="left:1040px;top:733px;width:94px">10 &lt; 100</div><div class="a" style="left:72px;top:748px;width:1062px;height:24px;background:#fff;border-top:1px solid #bfbfbf;border-bottom:1px solid #bfbfbf"></div><div class="a" style="left:77px;top:750.5px;font-size:13.6px;line-height:16px;color:#1414d4;white-space:nowrap"><i>Opdracht:</i> line</div><div class="a" style="left:72px;top:772px;width:1062px;height:25px;background:#ececec"></div><div class="a" style="left:73px;top:777.5px;font-size:13.6px;line-height:16px;color:#111">Opdracht:</div><div class="a" style="left:137px;top:776px;width:970px;height:18px;background:#fff"></div><div class="a" style="left:1107px;top:772px;width:27px;height:25px;border:1px solid #b4b4b4;background:linear-gradient(#f6f6f6,#e8e8e8)"></div><svg class="a" style="left:1111px;top:777px;" width="18" height="14" viewBox="0 0 18 14"><rect x="1.5" y="1.5" width="14" height="10" fill="none" stroke="#222" stroke-width="1"/><rect x="1.5" y="1.5" width="14" height="2.6" fill="#000"/></svg><svg class="a" style="left:95px;top:155px" width="1023" height="577" viewBox="95 155 1023 577"><rect x="95" y="155" width="1023" height="577" fill="#000"/><rect x="229" y="155" width="2" height="577" fill="#131313"/><rect x="418" y="155" width="1" height="577" fill="#1e1e1e"/><rect x="606" y="155" width="1" height="577" fill="#262626"/><rect x="794" y="155" width="1" height="577" fill="#1e1e1e"/><rect x="982" y="155" width="2" height="577" fill="#131313"/><rect x="95" y="255" width="1023" height="1" fill="#262626"/><rect x="95" y="443" width="1023" height="1" fill="#262626"/><rect x="95" y="631" width="1023" height="1" fill="#262626"/><path d="M98 726h1v1h-1zM98 707h1v1h-1zM98 688h1v1h-1zM98 669h1v1h-1zM98 650h1v1h-1zM98 632h1v1h-1zM98 613h1v1h-1zM98 594h1v1h-1zM98 575h1v1h-1zM98 556h1v1h-1zM98 537h1v1h-1zM98 519h1v1h-1zM98 500h1v1h-1zM98 481h1v1h-1zM98 462h1v1h-1zM98 443h1v1h-1zM98 424h1v1h-1zM98 406h1v1h-1zM98 387h1v1h-1zM98 368h1v1h-1zM98 349h1v1h-1zM98 330h1v1h-1zM98 311h1v1h-1zM98 293h1v1h-1zM98 274h1v1h-1zM98 255h1v1h-1zM98 236h1v1h-1zM98 217h1v1h-1zM98 199h1v1h-1zM98 180h1v1h-1zM98 161h1v1h-1zM117 726h1v1h-1zM117 707h1v1h-1zM117 688h1v1h-1zM117 669h1v1h-1zM117 650h1v1h-1zM117 632h1v1h-1zM117 613h1v1h-1zM117 594h1v1h-1zM117 575h1v1h-1zM117 556h1v1h-1zM117 537h1v1h-1zM117 519h1v1h-1zM117 500h1v1h-1zM117 481h1v1h-1zM117 462h1v1h-1zM117 443h1v1h-1zM117 424h1v1h-1zM117 406h1v1h-1zM117 387h1v1h-1zM117 368h1v1h-1zM117 349h1v1h-1zM117 330h1v1h-1zM117 311h1v1h-1zM117 293h1v1h-1zM117 274h1v1h-1zM117 255h1v1h-1zM117 236h1v1h-1zM117 217h1v1h-1zM117 199h1v1h-1zM117 180h1v1h-1zM117 161h1v1h-1zM136 726h1v1h-1zM136 707h1v1h-1zM136 688h1v1h-1zM136 669h1v1h-1zM136 650h1v1h-1zM136 632h1v1h-1zM136 613h1v1h-1zM136 594h1v1h-1zM136 575h1v1h-1zM136 556h1v1h-1zM136 537h1v1h-1zM136 519h1v1h-1zM136 500h1v1h-1zM136 481h1v1h-1zM136 462h1v1h-1zM136 443h1v1h-1zM136 424h1v1h-1zM136 406h1v1h-1zM136 387h1v1h-1zM136 368h1v1h-1zM136 349h1v1h-1zM136 330h1v1h-1zM136 311h1v1h-1zM136 293h1v1h-1zM136 274h1v1h-1zM136 255h1v1h-1zM136 236h1v1h-1zM136 217h1v1h-1zM136 199h1v1h-1zM136 180h1v1h-1zM136 161h1v1h-1zM155 726h1v1h-1zM155 707h1v1h-1zM155 688h1v1h-1zM155 669h1v1h-1zM155 650h1v1h-1zM155 632h1v1h-1zM155 613h1v1h-1zM155 594h1v1h-1zM155 575h1v1h-1zM155 556h1v1h-1zM155 537h1v1h-1zM155 519h1v1h-1zM155 500h1v1h-1zM155 481h1v1h-1zM155 462h1v1h-1zM155 443h1v1h-1zM155 424h1v1h-1zM155 406h1v1h-1zM155 387h1v1h-1zM155 368h1v1h-1zM155 349h1v1h-1zM155 330h1v1h-1zM155 311h1v1h-1zM155 293h1v1h-1zM155 274h1v1h-1zM155 255h1v1h-1zM155 236h1v1h-1zM155 217h1v1h-1zM155 199h1v1h-1zM155 180h1v1h-1zM155 161h1v1h-1zM173 726h1v1h-1zM173 707h1v1h-1zM173 688h1v1h-1zM173 669h1v1h-1zM173 650h1v1h-1zM173 632h1v1h-1zM173 613h1v1h-1zM173 594h1v1h-1zM173 575h1v1h-1zM173 556h1v1h-1zM173 537h1v1h-1zM173 519h1v1h-1zM173 500h1v1h-1zM173 481h1v1h-1zM173 462h1v1h-1zM173 443h1v1h-1zM173 424h1v1h-1zM173 406h1v1h-1zM173 387h1v1h-1zM173 368h1v1h-1zM173 349h1v1h-1zM173 330h1v1h-1zM173 311h1v1h-1zM173 293h1v1h-1zM173 274h1v1h-1zM173 255h1v1h-1zM173 236h1v1h-1zM173 217h1v1h-1zM173 199h1v1h-1zM173 180h1v1h-1zM173 161h1v1h-1zM192 726h1v1h-1zM192 707h1v1h-1zM192 688h1v1h-1zM192 669h1v1h-1zM192 650h1v1h-1zM192 632h1v1h-1zM192 613h1v1h-1zM192 594h1v1h-1zM192 575h1v1h-1zM192 556h1v1h-1zM192 537h1v1h-1zM192 519h1v1h-1zM192 500h1v1h-1zM192 481h1v1h-1zM192 462h1v1h-1zM192 443h1v1h-1zM192 424h1v1h-1zM192 406h1v1h-1zM192 387h1v1h-1zM192 368h1v1h-1zM192 349h1v1h-1zM192 330h1v1h-1zM192 311h1v1h-1zM192 293h1v1h-1zM192 274h1v1h-1zM192 255h1v1h-1zM192 236h1v1h-1zM192 217h1v1h-1zM192 199h1v1h-1zM192 180h1v1h-1zM192 161h1v1h-1zM211 726h1v1h-1zM211 707h1v1h-1zM211 688h1v1h-1zM211 669h1v1h-1zM211 650h1v1h-1zM211 632h1v1h-1zM211 613h1v1h-1zM211 594h1v1h-1zM211 575h1v1h-1zM211 556h1v1h-1zM211 537h1v1h-1zM211 519h1v1h-1zM211 500h1v1h-1zM211 481h1v1h-1zM211 462h1v1h-1zM211 443h1v1h-1zM211 424h1v1h-1zM211 406h1v1h-1zM211 387h1v1h-1zM211 368h1v1h-1zM211 349h1v1h-1zM211 330h1v1h-1zM211 311h1v1h-1zM211 293h1v1h-1zM211 274h1v1h-1zM211 255h1v1h-1zM211 236h1v1h-1zM211 217h1v1h-1zM211 199h1v1h-1zM211 180h1v1h-1zM211 161h1v1h-1zM230 726h1v1h-1zM230 707h1v1h-1zM230 688h1v1h-1zM230 669h1v1h-1zM230 650h1v1h-1zM230 632h1v1h-1zM230 613h1v1h-1zM230 594h1v1h-1zM230 575h1v1h-1zM230 556h1v1h-1zM230 537h1v1h-1zM230 519h1v1h-1zM230 500h1v1h-1zM230 481h1v1h-1zM230 462h1v1h-1zM230 443h1v1h-1zM230 424h1v1h-1zM230 406h1v1h-1zM230 387h1v1h-1zM230 368h1v1h-1zM230 349h1v1h-1zM230 330h1v1h-1zM230 311h1v1h-1zM230 293h1v1h-1zM230 274h1v1h-1zM230 255h1v1h-1zM230 236h1v1h-1zM230 217h1v1h-1zM230 199h1v1h-1zM230 180h1v1h-1zM230 161h1v1h-1zM249 726h1v1h-1zM249 707h1v1h-1zM249 688h1v1h-1zM249 669h1v1h-1zM249 650h1v1h-1zM249 632h1v1h-1zM249 613h1v1h-1zM249 594h1v1h-1zM249 575h1v1h-1zM249 556h1v1h-1zM249 537h1v1h-1zM249 519h1v1h-1zM249 500h1v1h-1zM249 481h1v1h-1zM249 462h1v1h-1zM249 443h1v1h-1zM249 424h1v1h-1zM249 406h1v1h-1zM249 387h1v1h-1zM249 368h1v1h-1zM249 349h1v1h-1zM249 330h1v1h-1zM249 311h1v1h-1zM249 293h1v1h-1zM249 274h1v1h-1zM249 255h1v1h-1zM249 236h1v1h-1zM249 217h1v1h-1zM249 199h1v1h-1zM249 180h1v1h-1zM249 161h1v1h-1zM268 726h1v1h-1zM268 707h1v1h-1zM268 688h1v1h-1zM268 669h1v1h-1zM268 650h1v1h-1zM268 632h1v1h-1zM268 613h1v1h-1zM268 594h1v1h-1zM268 575h1v1h-1zM268 556h1v1h-1zM268 537h1v1h-1zM268 519h1v1h-1zM268 500h1v1h-1zM268 481h1v1h-1zM268 462h1v1h-1zM268 443h1v1h-1zM268 424h1v1h-1zM268 406h1v1h-1zM268 387h1v1h-1zM268 368h1v1h-1zM268 349h1v1h-1zM268 330h1v1h-1zM268 311h1v1h-1zM268 293h1v1h-1zM268 274h1v1h-1zM268 255h1v1h-1zM268 236h1v1h-1zM268 217h1v1h-1zM268 199h1v1h-1zM268 180h1v1h-1zM268 161h1v1h-1zM286 726h1v1h-1zM286 707h1v1h-1zM286 688h1v1h-1zM286 669h1v1h-1zM286 650h1v1h-1zM286 632h1v1h-1zM286 613h1v1h-1zM286 594h1v1h-1zM286 575h1v1h-1zM286 556h1v1h-1zM286 537h1v1h-1zM286 519h1v1h-1zM286 500h1v1h-1zM286 481h1v1h-1zM286 462h1v1h-1zM286 443h1v1h-1zM286 424h1v1h-1zM286 406h1v1h-1zM286 387h1v1h-1zM286 368h1v1h-1zM286 349h1v1h-1zM286 330h1v1h-1zM286 311h1v1h-1zM286 293h1v1h-1zM286 274h1v1h-1zM286 255h1v1h-1zM286 236h1v1h-1zM286 217h1v1h-1zM286 199h1v1h-1zM286 180h1v1h-1zM286 161h1v1h-1zM305 726h1v1h-1zM305 707h1v1h-1zM305 688h1v1h-1zM305 669h1v1h-1zM305 650h1v1h-1zM305 632h1v1h-1zM305 613h1v1h-1zM305 594h1v1h-1zM305 575h1v1h-1zM305 556h1v1h-1zM305 537h1v1h-1zM305 519h1v1h-1zM305 500h1v1h-1zM305 481h1v1h-1zM305 462h1v1h-1zM305 443h1v1h-1zM305 424h1v1h-1zM305 406h1v1h-1zM305 387h1v1h-1zM305 368h1v1h-1zM305 349h1v1h-1zM305 330h1v1h-1zM305 311h1v1h-1zM305 293h1v1h-1zM305 274h1v1h-1zM305 255h1v1h-1zM305 236h1v1h-1zM305 217h1v1h-1zM305 199h1v1h-1zM305 180h1v1h-1zM305 161h1v1h-1zM324 726h1v1h-1zM324 707h1v1h-1zM324 688h1v1h-1zM324 669h1v1h-1zM324 650h1v1h-1zM324 632h1v1h-1zM324 613h1v1h-1zM324 594h1v1h-1zM324 575h1v1h-1zM324 556h1v1h-1zM324 537h1v1h-1zM324 519h1v1h-1zM324 500h1v1h-1zM324 481h1v1h-1zM324 462h1v1h-1zM324 443h1v1h-1zM324 424h1v1h-1zM324 406h1v1h-1zM324 387h1v1h-1zM324 368h1v1h-1zM324 349h1v1h-1zM324 330h1v1h-1zM324 311h1v1h-1zM324 293h1v1h-1zM324 274h1v1h-1zM324 255h1v1h-1zM324 236h1v1h-1zM324 217h1v1h-1zM324 199h1v1h-1zM324 180h1v1h-1zM324 161h1v1h-1zM343 726h1v1h-1zM343 707h1v1h-1zM343 688h1v1h-1zM343 669h1v1h-1zM343 650h1v1h-1zM343 632h1v1h-1zM343 613h1v1h-1zM343 594h1v1h-1zM343 575h1v1h-1zM343 556h1v1h-1zM343 537h1v1h-1zM343 519h1v1h-1zM343 500h1v1h-1zM343 481h1v1h-1zM343 462h1v1h-1zM343 443h1v1h-1zM343 424h1v1h-1zM343 406h1v1h-1zM343 387h1v1h-1zM343 368h1v1h-1zM343 349h1v1h-1zM343 330h1v1h-1zM343 311h1v1h-1zM343 293h1v1h-1zM343 274h1v1h-1zM343 255h1v1h-1zM343 236h1v1h-1zM343 217h1v1h-1zM343 199h1v1h-1zM343 180h1v1h-1zM343 161h1v1h-1zM362 726h1v1h-1zM362 707h1v1h-1zM362 688h1v1h-1zM362 669h1v1h-1zM362 650h1v1h-1zM362 632h1v1h-1zM362 613h1v1h-1zM362 594h1v1h-1zM362 575h1v1h-1zM362 556h1v1h-1zM362 537h1v1h-1zM362 519h1v1h-1zM362 500h1v1h-1zM362 481h1v1h-1zM362 462h1v1h-1zM362 443h1v1h-1zM362 424h1v1h-1zM362 406h1v1h-1zM362 387h1v1h-1zM362 368h1v1h-1zM362 349h1v1h-1zM362 330h1v1h-1zM362 311h1v1h-1zM362 293h1v1h-1zM362 274h1v1h-1zM362 255h1v1h-1zM362 236h1v1h-1zM362 217h1v1h-1zM362 199h1v1h-1zM362 180h1v1h-1zM362 161h1v1h-1zM381 726h1v1h-1zM381 707h1v1h-1zM381 688h1v1h-1zM381 669h1v1h-1zM381 650h1v1h-1zM381 632h1v1h-1zM381 613h1v1h-1zM381 594h1v1h-1zM381 575h1v1h-1zM381 556h1v1h-1zM381 537h1v1h-1zM381 519h1v1h-1zM381 500h1v1h-1zM381 481h1v1h-1zM381 462h1v1h-1zM381 443h1v1h-1zM381 424h1v1h-1zM381 406h1v1h-1zM381 387h1v1h-1zM381 368h1v1h-1zM381 349h1v1h-1zM381 330h1v1h-1zM381 311h1v1h-1zM381 293h1v1h-1zM381 274h1v1h-1zM381 255h1v1h-1zM381 236h1v1h-1zM381 217h1v1h-1zM381 199h1v1h-1zM381 180h1v1h-1zM381 161h1v1h-1zM399 726h1v1h-1zM399 707h1v1h-1zM399 688h1v1h-1zM399 669h1v1h-1zM399 650h1v1h-1zM399 632h1v1h-1zM399 613h1v1h-1zM399 594h1v1h-1zM399 575h1v1h-1zM399 556h1v1h-1zM399 537h1v1h-1zM399 519h1v1h-1zM399 500h1v1h-1zM399 481h1v1h-1zM399 462h1v1h-1zM399 443h1v1h-1zM399 424h1v1h-1zM399 406h1v1h-1zM399 387h1v1h-1zM399 368h1v1h-1zM399 349h1v1h-1zM399 330h1v1h-1zM399 311h1v1h-1zM399 293h1v1h-1zM399 274h1v1h-1zM399 255h1v1h-1zM399 236h1v1h-1zM399 217h1v1h-1zM399 199h1v1h-1zM399 180h1v1h-1zM399 161h1v1h-1zM418 726h1v1h-1zM418 707h1v1h-1zM418 688h1v1h-1zM418 669h1v1h-1zM418 650h1v1h-1zM418 632h1v1h-1zM418 613h1v1h-1zM418 594h1v1h-1zM418 575h1v1h-1zM418 556h1v1h-1zM418 537h1v1h-1zM418 519h1v1h-1zM418 500h1v1h-1zM418 481h1v1h-1zM418 462h1v1h-1zM418 443h1v1h-1zM418 424h1v1h-1zM418 406h1v1h-1zM418 387h1v1h-1zM418 368h1v1h-1zM418 349h1v1h-1zM418 330h1v1h-1zM418 311h1v1h-1zM418 293h1v1h-1zM418 274h1v1h-1zM418 255h1v1h-1zM418 236h1v1h-1zM418 217h1v1h-1zM418 199h1v1h-1zM418 180h1v1h-1zM418 161h1v1h-1zM437 726h1v1h-1zM437 707h1v1h-1zM437 688h1v1h-1zM437 669h1v1h-1zM437 650h1v1h-1zM437 632h1v1h-1zM437 613h1v1h-1zM437 594h1v1h-1zM437 575h1v1h-1zM437 556h1v1h-1zM437 537h1v1h-1zM437 519h1v1h-1zM437 500h1v1h-1zM437 481h1v1h-1zM437 462h1v1h-1zM437 443h1v1h-1zM437 424h1v1h-1zM437 406h1v1h-1zM437 387h1v1h-1zM437 368h1v1h-1zM437 349h1v1h-1zM437 330h1v1h-1zM437 311h1v1h-1zM437 293h1v1h-1zM437 274h1v1h-1zM437 255h1v1h-1zM437 236h1v1h-1zM437 217h1v1h-1zM437 199h1v1h-1zM437 180h1v1h-1zM437 161h1v1h-1zM456 726h1v1h-1zM456 707h1v1h-1zM456 688h1v1h-1zM456 669h1v1h-1zM456 650h1v1h-1zM456 632h1v1h-1zM456 613h1v1h-1zM456 594h1v1h-1zM456 575h1v1h-1zM456 556h1v1h-1zM456 537h1v1h-1zM456 519h1v1h-1zM456 500h1v1h-1zM456 481h1v1h-1zM456 462h1v1h-1zM456 443h1v1h-1zM456 424h1v1h-1zM456 406h1v1h-1zM456 387h1v1h-1zM456 368h1v1h-1zM456 349h1v1h-1zM456 330h1v1h-1zM456 311h1v1h-1zM456 293h1v1h-1zM456 274h1v1h-1zM456 255h1v1h-1zM456 236h1v1h-1zM456 217h1v1h-1zM456 199h1v1h-1zM456 180h1v1h-1zM456 161h1v1h-1zM475 726h1v1h-1zM475 707h1v1h-1zM475 688h1v1h-1zM475 669h1v1h-1zM475 650h1v1h-1zM475 632h1v1h-1zM475 613h1v1h-1zM475 594h1v1h-1zM475 575h1v1h-1zM475 556h1v1h-1zM475 537h1v1h-1zM475 519h1v1h-1zM475 500h1v1h-1zM475 481h1v1h-1zM475 462h1v1h-1zM475 443h1v1h-1zM475 424h1v1h-1zM475 406h1v1h-1zM475 387h1v1h-1zM475 368h1v1h-1zM475 349h1v1h-1zM475 330h1v1h-1zM475 311h1v1h-1zM475 293h1v1h-1zM475 274h1v1h-1zM475 255h1v1h-1zM475 236h1v1h-1zM475 217h1v1h-1zM475 199h1v1h-1zM475 180h1v1h-1zM475 161h1v1h-1zM494 726h1v1h-1zM494 707h1v1h-1zM494 688h1v1h-1zM494 669h1v1h-1zM494 650h1v1h-1zM494 632h1v1h-1zM494 613h1v1h-1zM494 594h1v1h-1zM494 575h1v1h-1zM494 556h1v1h-1zM494 537h1v1h-1zM494 519h1v1h-1zM494 500h1v1h-1zM494 481h1v1h-1zM494 462h1v1h-1zM494 443h1v1h-1zM494 424h1v1h-1zM494 406h1v1h-1zM494 387h1v1h-1zM494 368h1v1h-1zM494 349h1v1h-1zM494 330h1v1h-1zM494 311h1v1h-1zM494 293h1v1h-1zM494 274h1v1h-1zM494 255h1v1h-1zM494 236h1v1h-1zM494 217h1v1h-1zM494 199h1v1h-1zM494 180h1v1h-1zM494 161h1v1h-1zM512 726h1v1h-1zM512 707h1v1h-1zM512 688h1v1h-1zM512 669h1v1h-1zM512 650h1v1h-1zM512 632h1v1h-1zM512 613h1v1h-1zM512 594h1v1h-1zM512 575h1v1h-1zM512 556h1v1h-1zM512 537h1v1h-1zM512 519h1v1h-1zM512 500h1v1h-1zM512 481h1v1h-1zM512 462h1v1h-1zM512 443h1v1h-1zM512 424h1v1h-1zM512 406h1v1h-1zM512 387h1v1h-1zM512 368h1v1h-1zM512 349h1v1h-1zM512 330h1v1h-1zM512 311h1v1h-1zM512 293h1v1h-1zM512 274h1v1h-1zM512 255h1v1h-1zM512 236h1v1h-1zM512 217h1v1h-1zM512 199h1v1h-1zM512 180h1v1h-1zM512 161h1v1h-1zM531 726h1v1h-1zM531 707h1v1h-1zM531 688h1v1h-1zM531 669h1v1h-1zM531 650h1v1h-1zM531 632h1v1h-1zM531 613h1v1h-1zM531 594h1v1h-1zM531 575h1v1h-1zM531 556h1v1h-1zM531 537h1v1h-1zM531 519h1v1h-1zM531 500h1v1h-1zM531 481h1v1h-1zM531 462h1v1h-1zM531 443h1v1h-1zM531 424h1v1h-1zM531 406h1v1h-1zM531 387h1v1h-1zM531 368h1v1h-1zM531 349h1v1h-1zM531 330h1v1h-1zM531 311h1v1h-1zM531 293h1v1h-1zM531 274h1v1h-1zM531 255h1v1h-1zM531 236h1v1h-1zM531 217h1v1h-1zM531 199h1v1h-1zM531 180h1v1h-1zM531 161h1v1h-1zM550 726h1v1h-1zM550 707h1v1h-1zM550 688h1v1h-1zM550 669h1v1h-1zM550 650h1v1h-1zM550 632h1v1h-1zM550 613h1v1h-1zM550 594h1v1h-1zM550 575h1v1h-1zM550 556h1v1h-1zM550 537h1v1h-1zM550 519h1v1h-1zM550 500h1v1h-1zM550 481h1v1h-1zM550 462h1v1h-1zM550 443h1v1h-1zM550 424h1v1h-1zM550 406h1v1h-1zM550 387h1v1h-1zM550 368h1v1h-1zM550 349h1v1h-1zM550 330h1v1h-1zM550 311h1v1h-1zM550 293h1v1h-1zM550 274h1v1h-1zM550 255h1v1h-1zM550 236h1v1h-1zM550 217h1v1h-1zM550 199h1v1h-1zM550 180h1v1h-1zM550 161h1v1h-1zM569 726h1v1h-1zM569 707h1v1h-1zM569 688h1v1h-1zM569 669h1v1h-1zM569 650h1v1h-1zM569 632h1v1h-1zM569 613h1v1h-1zM569 594h1v1h-1zM569 575h1v1h-1zM569 556h1v1h-1zM569 537h1v1h-1zM569 519h1v1h-1zM569 500h1v1h-1zM569 481h1v1h-1zM569 462h1v1h-1zM569 443h1v1h-1zM569 424h1v1h-1zM569 406h1v1h-1zM569 387h1v1h-1zM569 368h1v1h-1zM569 349h1v1h-1zM569 330h1v1h-1zM569 311h1v1h-1zM569 293h1v1h-1zM569 274h1v1h-1zM569 255h1v1h-1zM569 236h1v1h-1zM569 217h1v1h-1zM569 199h1v1h-1zM569 180h1v1h-1zM569 161h1v1h-1zM588 726h1v1h-1zM588 707h1v1h-1zM588 688h1v1h-1zM588 669h1v1h-1zM588 650h1v1h-1zM588 632h1v1h-1zM588 613h1v1h-1zM588 594h1v1h-1zM588 575h1v1h-1zM588 556h1v1h-1zM588 537h1v1h-1zM588 519h1v1h-1zM588 500h1v1h-1zM588 481h1v1h-1zM588 462h1v1h-1zM588 443h1v1h-1zM588 424h1v1h-1zM588 406h1v1h-1zM588 387h1v1h-1zM588 368h1v1h-1zM588 349h1v1h-1zM588 330h1v1h-1zM588 311h1v1h-1zM588 293h1v1h-1zM588 274h1v1h-1zM588 255h1v1h-1zM588 236h1v1h-1zM588 217h1v1h-1zM588 199h1v1h-1zM588 180h1v1h-1zM588 161h1v1h-1zM606 726h1v1h-1zM606 707h1v1h-1zM606 688h1v1h-1zM606 669h1v1h-1zM606 650h1v1h-1zM606 632h1v1h-1zM606 613h1v1h-1zM606 594h1v1h-1zM606 575h1v1h-1zM606 556h1v1h-1zM606 537h1v1h-1zM606 519h1v1h-1zM606 500h1v1h-1zM606 481h1v1h-1zM606 462h1v1h-1zM606 443h1v1h-1zM606 424h1v1h-1zM606 406h1v1h-1zM606 387h1v1h-1zM606 368h1v1h-1zM606 349h1v1h-1zM606 330h1v1h-1zM606 311h1v1h-1zM606 293h1v1h-1zM606 274h1v1h-1zM606 255h1v1h-1zM606 236h1v1h-1zM606 217h1v1h-1zM606 199h1v1h-1zM606 180h1v1h-1zM606 161h1v1h-1zM625 726h1v1h-1zM625 707h1v1h-1zM625 688h1v1h-1zM625 669h1v1h-1zM625 650h1v1h-1zM625 632h1v1h-1zM625 613h1v1h-1zM625 594h1v1h-1zM625 575h1v1h-1zM625 556h1v1h-1zM625 537h1v1h-1zM625 519h1v1h-1zM625 500h1v1h-1zM625 481h1v1h-1zM625 462h1v1h-1zM625 443h1v1h-1zM625 424h1v1h-1zM625 406h1v1h-1zM625 387h1v1h-1zM625 368h1v1h-1zM625 349h1v1h-1zM625 330h1v1h-1zM625 311h1v1h-1zM625 293h1v1h-1zM625 274h1v1h-1zM625 255h1v1h-1zM625 236h1v1h-1zM625 217h1v1h-1zM625 199h1v1h-1zM625 180h1v1h-1zM625 161h1v1h-1zM644 726h1v1h-1zM644 707h1v1h-1zM644 688h1v1h-1zM644 669h1v1h-1zM644 650h1v1h-1zM644 632h1v1h-1zM644 613h1v1h-1zM644 594h1v1h-1zM644 575h1v1h-1zM644 556h1v1h-1zM644 537h1v1h-1zM644 519h1v1h-1zM644 500h1v1h-1zM644 481h1v1h-1zM644 462h1v1h-1zM644 443h1v1h-1zM644 424h1v1h-1zM644 406h1v1h-1zM644 387h1v1h-1zM644 368h1v1h-1zM644 349h1v1h-1zM644 330h1v1h-1zM644 311h1v1h-1zM644 293h1v1h-1zM644 274h1v1h-1zM644 255h1v1h-1zM644 236h1v1h-1zM644 217h1v1h-1zM644 199h1v1h-1zM644 180h1v1h-1zM644 161h1v1h-1zM663 726h1v1h-1zM663 707h1v1h-1zM663 688h1v1h-1zM663 669h1v1h-1zM663 650h1v1h-1zM663 632h1v1h-1zM663 613h1v1h-1zM663 594h1v1h-1zM663 575h1v1h-1zM663 556h1v1h-1zM663 537h1v1h-1zM663 519h1v1h-1zM663 500h1v1h-1zM663 481h1v1h-1zM663 462h1v1h-1zM663 443h1v1h-1zM663 424h1v1h-1zM663 406h1v1h-1zM663 387h1v1h-1zM663 368h1v1h-1zM663 349h1v1h-1zM663 330h1v1h-1zM663 311h1v1h-1zM663 293h1v1h-1zM663 274h1v1h-1zM663 255h1v1h-1zM663 236h1v1h-1zM663 217h1v1h-1zM663 199h1v1h-1zM663 180h1v1h-1zM663 161h1v1h-1zM682 726h1v1h-1zM682 707h1v1h-1zM682 688h1v1h-1zM682 669h1v1h-1zM682 650h1v1h-1zM682 632h1v1h-1zM682 613h1v1h-1zM682 594h1v1h-1zM682 575h1v1h-1zM682 556h1v1h-1zM682 537h1v1h-1zM682 519h1v1h-1zM682 500h1v1h-1zM682 481h1v1h-1zM682 462h1v1h-1zM682 443h1v1h-1zM682 424h1v1h-1zM682 406h1v1h-1zM682 387h1v1h-1zM682 368h1v1h-1zM682 349h1v1h-1zM682 330h1v1h-1zM682 311h1v1h-1zM682 293h1v1h-1zM682 274h1v1h-1zM682 255h1v1h-1zM682 236h1v1h-1zM682 217h1v1h-1zM682 199h1v1h-1zM682 180h1v1h-1zM682 161h1v1h-1zM701 726h1v1h-1zM701 707h1v1h-1zM701 688h1v1h-1zM701 669h1v1h-1zM701 650h1v1h-1zM701 632h1v1h-1zM701 613h1v1h-1zM701 594h1v1h-1zM701 575h1v1h-1zM701 556h1v1h-1zM701 537h1v1h-1zM701 519h1v1h-1zM701 500h1v1h-1zM701 481h1v1h-1zM701 462h1v1h-1zM701 443h1v1h-1zM701 424h1v1h-1zM701 406h1v1h-1zM701 387h1v1h-1zM701 368h1v1h-1zM701 349h1v1h-1zM701 330h1v1h-1zM701 311h1v1h-1zM701 293h1v1h-1zM701 274h1v1h-1zM701 255h1v1h-1zM701 236h1v1h-1zM701 217h1v1h-1zM701 199h1v1h-1zM701 180h1v1h-1zM701 161h1v1h-1zM719 726h1v1h-1zM719 707h1v1h-1zM719 688h1v1h-1zM719 669h1v1h-1zM719 650h1v1h-1zM719 632h1v1h-1zM719 613h1v1h-1zM719 594h1v1h-1zM719 575h1v1h-1zM719 556h1v1h-1zM719 537h1v1h-1zM719 519h1v1h-1zM719 500h1v1h-1zM719 481h1v1h-1zM719 462h1v1h-1zM719 443h1v1h-1zM719 424h1v1h-1zM719 406h1v1h-1zM719 387h1v1h-1zM719 368h1v1h-1zM719 349h1v1h-1zM719 330h1v1h-1zM719 311h1v1h-1zM719 293h1v1h-1zM719 274h1v1h-1zM719 255h1v1h-1zM719 236h1v1h-1zM719 217h1v1h-1zM719 199h1v1h-1zM719 180h1v1h-1zM719 161h1v1h-1zM738 726h1v1h-1zM738 707h1v1h-1zM738 688h1v1h-1zM738 669h1v1h-1zM738 650h1v1h-1zM738 632h1v1h-1zM738 613h1v1h-1zM738 594h1v1h-1zM738 575h1v1h-1zM738 556h1v1h-1zM738 537h1v1h-1zM738 519h1v1h-1zM738 500h1v1h-1zM738 481h1v1h-1zM738 462h1v1h-1zM738 443h1v1h-1zM738 424h1v1h-1zM738 406h1v1h-1zM738 387h1v1h-1zM738 368h1v1h-1zM738 349h1v1h-1zM738 330h1v1h-1zM738 311h1v1h-1zM738 293h1v1h-1zM738 274h1v1h-1zM738 255h1v1h-1zM738 236h1v1h-1zM738 217h1v1h-1zM738 199h1v1h-1zM738 180h1v1h-1zM738 161h1v1h-1zM757 726h1v1h-1zM757 707h1v1h-1zM757 688h1v1h-1zM757 669h1v1h-1zM757 650h1v1h-1zM757 632h1v1h-1zM757 613h1v1h-1zM757 594h1v1h-1zM757 575h1v1h-1zM757 556h1v1h-1zM757 537h1v1h-1zM757 519h1v1h-1zM757 500h1v1h-1zM757 481h1v1h-1zM757 462h1v1h-1zM757 443h1v1h-1zM757 424h1v1h-1zM757 406h1v1h-1zM757 387h1v1h-1zM757 368h1v1h-1zM757 349h1v1h-1zM757 330h1v1h-1zM757 311h1v1h-1zM757 293h1v1h-1zM757 274h1v1h-1zM757 255h1v1h-1zM757 236h1v1h-1zM757 217h1v1h-1zM757 199h1v1h-1zM757 180h1v1h-1zM757 161h1v1h-1zM776 726h1v1h-1zM776 707h1v1h-1zM776 688h1v1h-1zM776 669h1v1h-1zM776 650h1v1h-1zM776 632h1v1h-1zM776 613h1v1h-1zM776 594h1v1h-1zM776 575h1v1h-1zM776 556h1v1h-1zM776 537h1v1h-1zM776 519h1v1h-1zM776 500h1v1h-1zM776 481h1v1h-1zM776 462h1v1h-1zM776 443h1v1h-1zM776 424h1v1h-1zM776 406h1v1h-1zM776 387h1v1h-1zM776 368h1v1h-1zM776 349h1v1h-1zM776 330h1v1h-1zM776 311h1v1h-1zM776 293h1v1h-1zM776 274h1v1h-1zM776 255h1v1h-1zM776 236h1v1h-1zM776 217h1v1h-1zM776 199h1v1h-1zM776 180h1v1h-1zM776 161h1v1h-1zM795 726h1v1h-1zM795 707h1v1h-1zM795 688h1v1h-1zM795 669h1v1h-1zM795 650h1v1h-1zM795 632h1v1h-1zM795 613h1v1h-1zM795 594h1v1h-1zM795 575h1v1h-1zM795 556h1v1h-1zM795 537h1v1h-1zM795 519h1v1h-1zM795 500h1v1h-1zM795 481h1v1h-1zM795 462h1v1h-1zM795 443h1v1h-1zM795 424h1v1h-1zM795 406h1v1h-1zM795 387h1v1h-1zM795 368h1v1h-1zM795 349h1v1h-1zM795 330h1v1h-1zM795 311h1v1h-1zM795 293h1v1h-1zM795 274h1v1h-1zM795 255h1v1h-1zM795 236h1v1h-1zM795 217h1v1h-1zM795 199h1v1h-1zM795 180h1v1h-1zM795 161h1v1h-1zM814 726h1v1h-1zM814 707h1v1h-1zM814 688h1v1h-1zM814 669h1v1h-1zM814 650h1v1h-1zM814 632h1v1h-1zM814 613h1v1h-1zM814 594h1v1h-1zM814 575h1v1h-1zM814 556h1v1h-1zM814 537h1v1h-1zM814 519h1v1h-1zM814 500h1v1h-1zM814 481h1v1h-1zM814 462h1v1h-1zM814 443h1v1h-1zM814 424h1v1h-1zM814 406h1v1h-1zM814 387h1v1h-1zM814 368h1v1h-1zM814 349h1v1h-1zM814 330h1v1h-1zM814 311h1v1h-1zM814 293h1v1h-1zM814 274h1v1h-1zM814 255h1v1h-1zM814 236h1v1h-1zM814 217h1v1h-1zM814 199h1v1h-1zM814 180h1v1h-1zM814 161h1v1h-1zM832 726h1v1h-1zM832 707h1v1h-1zM832 688h1v1h-1zM832 669h1v1h-1zM832 650h1v1h-1zM832 632h1v1h-1zM832 613h1v1h-1zM832 594h1v1h-1zM832 575h1v1h-1zM832 556h1v1h-1zM832 537h1v1h-1zM832 519h1v1h-1zM832 500h1v1h-1zM832 481h1v1h-1zM832 462h1v1h-1zM832 443h1v1h-1zM832 424h1v1h-1zM832 406h1v1h-1zM832 387h1v1h-1zM832 368h1v1h-1zM832 349h1v1h-1zM832 330h1v1h-1zM832 311h1v1h-1zM832 293h1v1h-1zM832 274h1v1h-1zM832 255h1v1h-1zM832 236h1v1h-1zM832 217h1v1h-1zM832 199h1v1h-1zM832 180h1v1h-1zM832 161h1v1h-1zM851 726h1v1h-1zM851 707h1v1h-1zM851 688h1v1h-1zM851 669h1v1h-1zM851 650h1v1h-1zM851 632h1v1h-1zM851 613h1v1h-1zM851 594h1v1h-1zM851 575h1v1h-1zM851 556h1v1h-1zM851 537h1v1h-1zM851 519h1v1h-1zM851 500h1v1h-1zM851 481h1v1h-1zM851 462h1v1h-1zM851 443h1v1h-1zM851 424h1v1h-1zM851 406h1v1h-1zM851 387h1v1h-1zM851 368h1v1h-1zM851 349h1v1h-1zM851 330h1v1h-1zM851 311h1v1h-1zM851 293h1v1h-1zM851 274h1v1h-1zM851 255h1v1h-1zM851 236h1v1h-1zM851 217h1v1h-1zM851 199h1v1h-1zM851 180h1v1h-1zM851 161h1v1h-1zM870 726h1v1h-1zM870 707h1v1h-1zM870 688h1v1h-1zM870 669h1v1h-1zM870 650h1v1h-1zM870 632h1v1h-1zM870 613h1v1h-1zM870 594h1v1h-1zM870 575h1v1h-1zM870 556h1v1h-1zM870 537h1v1h-1zM870 519h1v1h-1zM870 500h1v1h-1zM870 481h1v1h-1zM870 462h1v1h-1zM870 443h1v1h-1zM870 424h1v1h-1zM870 406h1v1h-1zM870 387h1v1h-1zM870 368h1v1h-1zM870 349h1v1h-1zM870 330h1v1h-1zM870 311h1v1h-1zM870 293h1v1h-1zM870 274h1v1h-1zM870 255h1v1h-1zM870 236h1v1h-1zM870 217h1v1h-1zM870 199h1v1h-1zM870 180h1v1h-1zM870 161h1v1h-1zM889 726h1v1h-1zM889 707h1v1h-1zM889 688h1v1h-1zM889 669h1v1h-1zM889 650h1v1h-1zM889 632h1v1h-1zM889 613h1v1h-1zM889 594h1v1h-1zM889 575h1v1h-1zM889 556h1v1h-1zM889 537h1v1h-1zM889 519h1v1h-1zM889 500h1v1h-1zM889 481h1v1h-1zM889 462h1v1h-1zM889 443h1v1h-1zM889 424h1v1h-1zM889 406h1v1h-1zM889 387h1v1h-1zM889 368h1v1h-1zM889 349h1v1h-1zM889 330h1v1h-1zM889 311h1v1h-1zM889 293h1v1h-1zM889 274h1v1h-1zM889 255h1v1h-1zM889 236h1v1h-1zM889 217h1v1h-1zM889 199h1v1h-1zM889 180h1v1h-1zM889 161h1v1h-1zM908 726h1v1h-1zM908 707h1v1h-1zM908 688h1v1h-1zM908 669h1v1h-1zM908 650h1v1h-1zM908 632h1v1h-1zM908 613h1v1h-1zM908 594h1v1h-1zM908 575h1v1h-1zM908 556h1v1h-1zM908 537h1v1h-1zM908 519h1v1h-1zM908 500h1v1h-1zM908 481h1v1h-1zM908 462h1v1h-1zM908 443h1v1h-1zM908 424h1v1h-1zM908 406h1v1h-1zM908 387h1v1h-1zM908 368h1v1h-1zM908 349h1v1h-1zM908 330h1v1h-1zM908 311h1v1h-1zM908 293h1v1h-1zM908 274h1v1h-1zM908 255h1v1h-1zM908 236h1v1h-1zM908 217h1v1h-1zM908 199h1v1h-1zM908 180h1v1h-1zM908 161h1v1h-1zM926 726h1v1h-1zM926 707h1v1h-1zM926 688h1v1h-1zM926 669h1v1h-1zM926 650h1v1h-1zM926 632h1v1h-1zM926 613h1v1h-1zM926 594h1v1h-1zM926 575h1v1h-1zM926 556h1v1h-1zM926 537h1v1h-1zM926 519h1v1h-1zM926 500h1v1h-1zM926 481h1v1h-1zM926 462h1v1h-1zM926 443h1v1h-1zM926 424h1v1h-1zM926 406h1v1h-1zM926 387h1v1h-1zM926 368h1v1h-1zM926 349h1v1h-1zM926 330h1v1h-1zM926 311h1v1h-1zM926 293h1v1h-1zM926 274h1v1h-1zM926 255h1v1h-1zM926 236h1v1h-1zM926 217h1v1h-1zM926 199h1v1h-1zM926 180h1v1h-1zM926 161h1v1h-1zM945 726h1v1h-1zM945 707h1v1h-1zM945 688h1v1h-1zM945 669h1v1h-1zM945 650h1v1h-1zM945 632h1v1h-1zM945 613h1v1h-1zM945 594h1v1h-1zM945 575h1v1h-1zM945 556h1v1h-1zM945 537h1v1h-1zM945 519h1v1h-1zM945 500h1v1h-1zM945 481h1v1h-1zM945 462h1v1h-1zM945 443h1v1h-1zM945 424h1v1h-1zM945 406h1v1h-1zM945 387h1v1h-1zM945 368h1v1h-1zM945 349h1v1h-1zM945 330h1v1h-1zM945 311h1v1h-1zM945 293h1v1h-1zM945 274h1v1h-1zM945 255h1v1h-1zM945 236h1v1h-1zM945 217h1v1h-1zM945 199h1v1h-1zM945 180h1v1h-1zM945 161h1v1h-1zM964 726h1v1h-1zM964 707h1v1h-1zM964 688h1v1h-1zM964 669h1v1h-1zM964 650h1v1h-1zM964 632h1v1h-1zM964 613h1v1h-1zM964 594h1v1h-1zM964 575h1v1h-1zM964 556h1v1h-1zM964 537h1v1h-1zM964 519h1v1h-1zM964 500h1v1h-1zM964 481h1v1h-1zM964 462h1v1h-1zM964 443h1v1h-1zM964 424h1v1h-1zM964 406h1v1h-1zM964 387h1v1h-1zM964 368h1v1h-1zM964 349h1v1h-1zM964 330h1v1h-1zM964 311h1v1h-1zM964 293h1v1h-1zM964 274h1v1h-1zM964 255h1v1h-1zM964 236h1v1h-1zM964 217h1v1h-1zM964 199h1v1h-1zM964 180h1v1h-1zM964 161h1v1h-1zM983 726h1v1h-1zM983 707h1v1h-1zM983 688h1v1h-1zM983 669h1v1h-1zM983 650h1v1h-1zM983 632h1v1h-1zM983 613h1v1h-1zM983 594h1v1h-1zM983 575h1v1h-1zM983 556h1v1h-1zM983 537h1v1h-1zM983 519h1v1h-1zM983 500h1v1h-1zM983 481h1v1h-1zM983 462h1v1h-1zM983 443h1v1h-1zM983 424h1v1h-1zM983 406h1v1h-1zM983 387h1v1h-1zM983 368h1v1h-1zM983 349h1v1h-1zM983 330h1v1h-1zM983 311h1v1h-1zM983 293h1v1h-1zM983 274h1v1h-1zM983 255h1v1h-1zM983 236h1v1h-1zM983 217h1v1h-1zM983 199h1v1h-1zM983 180h1v1h-1zM983 161h1v1h-1zM1002 726h1v1h-1zM1002 707h1v1h-1zM1002 688h1v1h-1zM1002 669h1v1h-1zM1002 650h1v1h-1zM1002 632h1v1h-1zM1002 613h1v1h-1zM1002 594h1v1h-1zM1002 575h1v1h-1zM1002 556h1v1h-1zM1002 537h1v1h-1zM1002 519h1v1h-1zM1002 500h1v1h-1zM1002 481h1v1h-1zM1002 462h1v1h-1zM1002 443h1v1h-1zM1002 424h1v1h-1zM1002 406h1v1h-1zM1002 387h1v1h-1zM1002 368h1v1h-1zM1002 349h1v1h-1zM1002 330h1v1h-1zM1002 311h1v1h-1zM1002 293h1v1h-1zM1002 274h1v1h-1zM1002 255h1v1h-1zM1002 236h1v1h-1zM1002 217h1v1h-1zM1002 199h1v1h-1zM1002 180h1v1h-1zM1002 161h1v1h-1zM1021 726h1v1h-1zM1021 707h1v1h-1zM1021 688h1v1h-1zM1021 669h1v1h-1zM1021 650h1v1h-1zM1021 632h1v1h-1zM1021 613h1v1h-1zM1021 594h1v1h-1zM1021 575h1v1h-1zM1021 556h1v1h-1zM1021 537h1v1h-1zM1021 519h1v1h-1zM1021 500h1v1h-1zM1021 481h1v1h-1zM1021 462h1v1h-1zM1021 443h1v1h-1zM1021 424h1v1h-1zM1021 406h1v1h-1zM1021 387h1v1h-1zM1021 368h1v1h-1zM1021 349h1v1h-1zM1021 330h1v1h-1zM1021 311h1v1h-1zM1021 293h1v1h-1zM1021 274h1v1h-1zM1021 255h1v1h-1zM1021 236h1v1h-1zM1021 217h1v1h-1zM1021 199h1v1h-1zM1021 180h1v1h-1zM1021 161h1v1h-1zM1039 726h1v1h-1zM1039 707h1v1h-1zM1039 688h1v1h-1zM1039 669h1v1h-1zM1039 650h1v1h-1zM1039 632h1v1h-1zM1039 613h1v1h-1zM1039 594h1v1h-1zM1039 575h1v1h-1zM1039 556h1v1h-1zM1039 537h1v1h-1zM1039 519h1v1h-1zM1039 500h1v1h-1zM1039 481h1v1h-1zM1039 462h1v1h-1zM1039 443h1v1h-1zM1039 424h1v1h-1zM1039 406h1v1h-1zM1039 387h1v1h-1zM1039 368h1v1h-1zM1039 349h1v1h-1zM1039 330h1v1h-1zM1039 311h1v1h-1zM1039 293h1v1h-1zM1039 274h1v1h-1zM1039 255h1v1h-1zM1039 236h1v1h-1zM1039 217h1v1h-1zM1039 199h1v1h-1zM1039 180h1v1h-1zM1039 161h1v1h-1zM1058 726h1v1h-1zM1058 707h1v1h-1zM1058 688h1v1h-1zM1058 669h1v1h-1zM1058 650h1v1h-1zM1058 632h1v1h-1zM1058 613h1v1h-1zM1058 594h1v1h-1zM1058 575h1v1h-1zM1058 556h1v1h-1zM1058 537h1v1h-1zM1058 519h1v1h-1zM1058 500h1v1h-1zM1058 481h1v1h-1zM1058 462h1v1h-1zM1058 443h1v1h-1zM1058 424h1v1h-1zM1058 406h1v1h-1zM1058 387h1v1h-1zM1058 368h1v1h-1zM1058 349h1v1h-1zM1058 330h1v1h-1zM1058 311h1v1h-1zM1058 293h1v1h-1zM1058 274h1v1h-1zM1058 255h1v1h-1zM1058 236h1v1h-1zM1058 217h1v1h-1zM1058 199h1v1h-1zM1058 180h1v1h-1zM1058 161h1v1h-1zM1077 726h1v1h-1zM1077 707h1v1h-1zM1077 688h1v1h-1zM1077 669h1v1h-1zM1077 650h1v1h-1zM1077 632h1v1h-1zM1077 613h1v1h-1zM1077 594h1v1h-1zM1077 575h1v1h-1zM1077 556h1v1h-1zM1077 537h1v1h-1zM1077 519h1v1h-1zM1077 500h1v1h-1zM1077 481h1v1h-1zM1077 462h1v1h-1zM1077 443h1v1h-1zM1077 424h1v1h-1zM1077 406h1v1h-1zM1077 387h1v1h-1zM1077 368h1v1h-1zM1077 349h1v1h-1zM1077 330h1v1h-1zM1077 311h1v1h-1zM1077 293h1v1h-1zM1077 274h1v1h-1zM1077 255h1v1h-1zM1077 236h1v1h-1zM1077 217h1v1h-1zM1077 199h1v1h-1zM1077 180h1v1h-1zM1077 161h1v1h-1zM1096 726h1v1h-1zM1096 707h1v1h-1zM1096 688h1v1h-1zM1096 669h1v1h-1zM1096 650h1v1h-1zM1096 632h1v1h-1zM1096 613h1v1h-1zM1096 594h1v1h-1zM1096 575h1v1h-1zM1096 556h1v1h-1zM1096 537h1v1h-1zM1096 519h1v1h-1zM1096 500h1v1h-1zM1096 481h1v1h-1zM1096 462h1v1h-1zM1096 443h1v1h-1zM1096 424h1v1h-1zM1096 406h1v1h-1zM1096 387h1v1h-1zM1096 368h1v1h-1zM1096 349h1v1h-1zM1096 330h1v1h-1zM1096 311h1v1h-1zM1096 293h1v1h-1zM1096 274h1v1h-1zM1096 255h1v1h-1zM1096 236h1v1h-1zM1096 217h1v1h-1zM1096 199h1v1h-1zM1096 180h1v1h-1zM1096 161h1v1h-1zM1115 726h1v1h-1zM1115 707h1v1h-1zM1115 688h1v1h-1zM1115 669h1v1h-1zM1115 650h1v1h-1zM1115 632h1v1h-1zM1115 613h1v1h-1zM1115 594h1v1h-1zM1115 575h1v1h-1zM1115 556h1v1h-1zM1115 537h1v1h-1zM1115 519h1v1h-1zM1115 500h1v1h-1zM1115 481h1v1h-1zM1115 462h1v1h-1zM1115 443h1v1h-1zM1115 424h1v1h-1zM1115 406h1v1h-1zM1115 387h1v1h-1zM1115 368h1v1h-1zM1115 349h1v1h-1zM1115 330h1v1h-1zM1115 311h1v1h-1zM1115 293h1v1h-1zM1115 274h1v1h-1zM1115 255h1v1h-1zM1115 236h1v1h-1zM1115 217h1v1h-1zM1115 199h1v1h-1zM1115 180h1v1h-1zM1115 161h1v1h-1z" fill="#4a4a4a"/><circle cx="606.55" cy="443.35" r="188" fill="none" stroke="#cfcfcf" stroke-width="1.1"/><circle cx="606.55" cy="443.35" r="169.2" fill="none" stroke="#cfcfcf" stroke-width="1.1"/><circle cx="606.55" cy="443.35" r="157.8" fill="none" stroke="#6e2a2a" stroke-width="1"/><circle cx="606.55" cy="443.35" r="146.6" fill="none" stroke="#6e2a2a" stroke-width="1"/><g fill="none" stroke="#7a3939" stroke-width="3.1"><path transform="translate(586,306)" d="M1.2 9.5 C4.5 7.5 7.5 5 9.5 1.2 L9.5 30"/><path transform="translate(606.5,306)" d="M1.8 9 C1.8 4.5 5 1.5 10 1.5 C15 1.5 18.3 4.5 18.3 8.8 C18.3 12.5 15.5 15 12 17.5 C7 21 2.5 25 1.5 28.5 L19.5 28.5"/><path transform="translate(662,322)" d="M1.2 9.5 C4.5 7.5 7.5 5 9.5 1.2 L9.5 30"/><path transform="translate(702.4,367.1)" d="M1.8 9 C1.8 4.5 5 1.5 10 1.5 C15 1.5 18.3 4.5 18.3 8.8 C18.3 12.5 15.5 15 12 17.5 C7 21 2.5 25 1.5 28.5 L19.5 28.5"/><path transform="translate(718.8,428.3)" d="M2.2 7 C3.2 3.5 6 1.5 10 1.5 C14.5 1.5 17.2 4 17.2 7.8 C17.2 11.5 14.5 14 9 14 C14.5 14 18.5 16.5 18.5 21 C18.5 25.5 15 28.5 10 28.5 C5.5 28.5 2.5 26 1.5 22.5"/><path transform="translate(701.8,489.2)" d="M15.5 30 L15.5 1.5 L1.5 22.2 L21 22.2"/><path transform="translate(657.7,534.2)" d="M18.5 1.8 L4.2 1.8 L2.5 14.5 C4.5 12.5 7 11.5 10 11.5 C15 11.5 18.5 15 18.5 20 C18.5 25 15 28.5 10 28.5 C6 28.5 2.8 26.5 1.5 23"/><path transform="translate(596.6,550.4)" d="M18 7.5 C17 3.5 14 1.5 10.5 1.5 C4.5 1.5 1.5 8 1.5 16 C1.5 24 4.5 28.5 10 28.5 C15 28.5 18 25 18 20.5 C18 15.5 15 12.5 10 12.5 C6 12.5 2.5 15 1.5 19"/><path transform="translate(535.7,535)" d="M0 1.8 L19 1.8 C13.5 9 9 17 7.5 30"/><path transform="translate(490.7,489.2)" d="M10 1.5 C5.8 1.5 3 4.3 3 7.8 C3 11.5 6 14.2 10 14.2 C14 14.2 17 11.5 17 7.8 C17 4.3 14.2 1.5 10 1.5 Z M10 14.2 C5 14.2 1.5 17.3 1.5 21.3 C1.5 25.5 5 28.5 10 28.5 C15 28.5 18.5 25.5 18.5 21.3 C18.5 17.3 15 14.2 10 14.2 Z"/><path transform="translate(474,428.3)" d="M2 22.5 C3 26.5 6 28.5 9.5 28.5 C15.5 28.5 18.5 22 18.5 14 C18.5 6 15.5 1.5 10 1.5 C5 1.5 2 5 2 9.5 C2 14.5 5 17.5 10 17.5 C14 17.5 17.5 15 18.5 11"/><path transform="translate(480,367.5)" d="M1.2 9.5 C4.5 7.5 7.5 5 9.5 1.2 L9.5 30"/><path transform="translate(501.4,367.5)" d="M10 1.5 C4.5 1.5 1.5 7 1.5 15 C1.5 23 4.5 28.5 10 28.5 C15.5 28.5 18.5 23 18.5 15 C18.5 7 15.5 1.5 10 1.5 Z"/><path transform="translate(529.8,322.4)" d="M1.2 9.5 C4.5 7.5 7.5 5 9.5 1.2 L9.5 30"/><path transform="translate(550,322.4)" d="M1.2 9.5 C4.5 7.5 7.5 5 9.5 1.2 L9.5 30"/></g><rect x="658.2" y="438.9" width="9" height="9" fill="#c8001e" stroke="#c87080" stroke-width="1"/><rect x="657.9" y="433.0" width="9" height="9" fill="#c8001e" stroke="#c87080" stroke-width="1"/><rect x="657.0" y="427.2" width="9" height="9" fill="#c8001e" stroke="#c87080" stroke-width="1"/><rect x="655.5" y="421.5" width="9" height="9" fill="#c8001e" stroke="#c87080" stroke-width="1"/><rect x="653.4" y="416.0" width="9" height="9" fill="#c8001e" stroke="#c87080" stroke-width="1"/><rect x="650.7" y="410.8" width="9" height="9" fill="#c8001e" stroke="#c87080" stroke-width="1"/><rect x="647.5" y="405.8" width="9" height="9" fill="#c8001e" stroke="#c87080" stroke-width="1"/><rect x="643.8" y="401.2" width="9" height="9" fill="#c8001e" stroke="#c87080" stroke-width="1"/><rect x="639.7" y="397.1" width="9" height="9" fill="#c8001e" stroke="#c87080" stroke-width="1"/><rect x="635.1" y="393.4" width="9" height="9" fill="#c8001e" stroke="#c87080" stroke-width="1"/><rect x="630.1" y="390.2" width="9" height="9" fill="#c8001e" stroke="#c87080" stroke-width="1"/><rect x="624.9" y="387.5" width="9" height="9" fill="#c8001e" stroke="#c87080" stroke-width="1"/><rect x="619.4" y="385.4" width="9" height="9" fill="#c8001e" stroke="#c87080" stroke-width="1"/><rect x="613.7" y="383.9" width="9" height="9" fill="#c8001e" stroke="#c87080" stroke-width="1"/><rect x="607.9" y="383.0" width="9" height="9" fill="#c8001e" stroke="#c87080" stroke-width="1"/><rect x="602.0" y="382.7" width="9" height="9" fill="#c8001e" stroke="#c87080" stroke-width="1"/><rect x="596.2" y="383.0" width="9" height="9" fill="#c8001e" stroke="#c87080" stroke-width="1"/><rect x="590.4" y="383.9" width="9" height="9" fill="#c8001e" stroke="#c87080" stroke-width="1"/><rect x="584.7" y="385.4" width="9" height="9" fill="#c8001e" stroke="#c87080" stroke-width="1"/><rect x="579.2" y="387.5" width="9" height="9" fill="#c8001e" stroke="#c87080" stroke-width="1"/><rect x="573.9" y="390.2" width="9" height="9" fill="#c8001e" stroke="#c87080" stroke-width="1"/><rect x="569.0" y="393.4" width="9" height="9" fill="#c8001e" stroke="#c87080" stroke-width="1"/><rect x="564.4" y="397.1" width="9" height="9" fill="#c8001e" stroke="#c87080" stroke-width="1"/><rect x="560.3" y="401.2" width="9" height="9" fill="#c8001e" stroke="#c87080" stroke-width="1"/><rect x="556.6" y="405.8" width="9" height="9" fill="#c8001e" stroke="#c87080" stroke-width="1"/><rect x="553.4" y="410.8" width="9" height="9" fill="#c8001e" stroke="#c87080" stroke-width="1"/><rect x="550.7" y="416.0" width="9" height="9" fill="#c8001e" stroke="#c87080" stroke-width="1"/><rect x="548.6" y="421.5" width="9" height="9" fill="#c8001e" stroke="#c87080" stroke-width="1"/><rect x="547.1" y="427.2" width="9" height="9" fill="#c8001e" stroke="#c87080" stroke-width="1"/><rect x="546.2" y="433.0" width="9" height="9" fill="#c8001e" stroke="#c87080" stroke-width="1"/><rect x="545.8" y="438.9" width="9" height="9" fill="#c8001e" stroke="#c87080" stroke-width="1"/><rect x="546.2" y="444.7" width="9" height="9" fill="#c8001e" stroke="#c87080" stroke-width="1"/><rect x="547.1" y="450.5" width="9" height="9" fill="#c8001e" stroke="#c87080" stroke-width="1"/><rect x="548.6" y="456.2" width="9" height="9" fill="#c8001e" stroke="#c87080" stroke-width="1"/><rect x="550.7" y="461.7" width="9" height="9" fill="#c8001e" stroke="#c87080" stroke-width="1"/><rect x="553.4" y="467.0" width="9" height="9" fill="#c8001e" stroke="#c87080" stroke-width="1"/><rect x="556.6" y="471.9" width="9" height="9" fill="#c8001e" stroke="#c87080" stroke-width="1"/><rect x="560.3" y="476.5" width="9" height="9" fill="#c8001e" stroke="#c87080" stroke-width="1"/><rect x="564.4" y="480.6" width="9" height="9" fill="#c8001e" stroke="#c87080" stroke-width="1"/><rect x="569.0" y="484.3" width="9" height="9" fill="#c8001e" stroke="#c87080" stroke-width="1"/><rect x="573.9" y="487.5" width="9" height="9" fill="#c8001e" stroke="#c87080" stroke-width="1"/><rect x="579.2" y="490.2" width="9" height="9" fill="#c8001e" stroke="#c87080" stroke-width="1"/><rect x="584.7" y="492.3" width="9" height="9" fill="#c8001e" stroke="#c87080" stroke-width="1"/><rect x="590.4" y="493.8" width="9" height="9" fill="#c8001e" stroke="#c87080" stroke-width="1"/><rect x="596.2" y="494.7" width="9" height="9" fill="#c8001e" stroke="#c87080" stroke-width="1"/><rect x="602.0" y="495.1" width="9" height="9" fill="#c8001e" stroke="#c87080" stroke-width="1"/><rect x="607.9" y="494.7" width="9" height="9" fill="#c8001e" stroke="#c87080" stroke-width="1"/><rect x="613.7" y="493.8" width="9" height="9" fill="#c8001e" stroke="#c87080" stroke-width="1"/><rect x="619.4" y="492.3" width="9" height="9" fill="#c8001e" stroke="#c87080" stroke-width="1"/><rect x="624.9" y="490.2" width="9" height="9" fill="#c8001e" stroke="#c87080" stroke-width="1"/><rect x="630.1" y="487.5" width="9" height="9" fill="#c8001e" stroke="#c87080" stroke-width="1"/><rect x="635.1" y="484.3" width="9" height="9" fill="#c8001e" stroke="#c87080" stroke-width="1"/><rect x="639.7" y="480.6" width="9" height="9" fill="#c8001e" stroke="#c87080" stroke-width="1"/><rect x="643.8" y="476.5" width="9" height="9" fill="#c8001e" stroke="#c87080" stroke-width="1"/><rect x="647.5" y="471.9" width="9" height="9" fill="#c8001e" stroke="#c87080" stroke-width="1"/><rect x="650.7" y="467.0" width="9" height="9" fill="#c8001e" stroke="#c87080" stroke-width="1"/><rect x="653.4" y="461.7" width="9" height="9" fill="#c8001e" stroke="#c87080" stroke-width="1"/><rect x="655.5" y="456.2" width="9" height="9" fill="#c8001e" stroke="#c87080" stroke-width="1"/><rect x="657.0" y="450.5" width="9" height="9" fill="#c8001e" stroke="#c87080" stroke-width="1"/><rect x="657.9" y="444.7" width="9" height="9" fill="#c8001e" stroke="#c87080" stroke-width="1"/><rect x="669.6" y="438.9" width="9" height="9" fill="#0000b0" stroke="#7070b8" stroke-width="1"/><rect x="669.3" y="431.8" width="9" height="9" fill="#0000b0" stroke="#7070b8" stroke-width="1"/><rect x="668.2" y="424.8" width="9" height="9" fill="#0000b0" stroke="#7070b8" stroke-width="1"/><rect x="666.3" y="418.0" width="9" height="9" fill="#0000b0" stroke="#7070b8" stroke-width="1"/><rect x="663.8" y="411.4" width="9" height="9" fill="#0000b0" stroke="#7070b8" stroke-width="1"/><rect x="660.6" y="405.1" width="9" height="9" fill="#0000b0" stroke="#7070b8" stroke-width="1"/><rect x="656.7" y="399.1" width="9" height="9" fill="#0000b0" stroke="#7070b8" stroke-width="1"/><rect x="652.3" y="393.6" width="9" height="9" fill="#0000b0" stroke="#7070b8" stroke-width="1"/><rect x="647.3" y="388.6" width="9" height="9" fill="#0000b0" stroke="#7070b8" stroke-width="1"/><rect x="641.8" y="384.2" width="9" height="9" fill="#0000b0" stroke="#7070b8" stroke-width="1"/><rect x="635.8" y="380.3" width="9" height="9" fill="#0000b0" stroke="#7070b8" stroke-width="1"/><rect x="629.5" y="377.1" width="9" height="9" fill="#0000b0" stroke="#7070b8" stroke-width="1"/><rect x="622.9" y="374.6" width="9" height="9" fill="#0000b0" stroke="#7070b8" stroke-width="1"/><rect x="616.1" y="372.7" width="9" height="9" fill="#0000b0" stroke="#7070b8" stroke-width="1"/><rect x="609.1" y="371.6" width="9" height="9" fill="#0000b0" stroke="#7070b8" stroke-width="1"/><rect x="602.0" y="371.2" width="9" height="9" fill="#0000b0" stroke="#7070b8" stroke-width="1"/><rect x="595.0" y="371.6" width="9" height="9" fill="#0000b0" stroke="#7070b8" stroke-width="1"/><rect x="588.0" y="372.7" width="9" height="9" fill="#0000b0" stroke="#7070b8" stroke-width="1"/><rect x="581.2" y="374.6" width="9" height="9" fill="#0000b0" stroke="#7070b8" stroke-width="1"/><rect x="574.6" y="377.1" width="9" height="9" fill="#0000b0" stroke="#7070b8" stroke-width="1"/><rect x="568.2" y="380.3" width="9" height="9" fill="#0000b0" stroke="#7070b8" stroke-width="1"/><rect x="562.3" y="384.2" width="9" height="9" fill="#0000b0" stroke="#7070b8" stroke-width="1"/><rect x="556.8" y="388.6" width="9" height="9" fill="#0000b0" stroke="#7070b8" stroke-width="1"/><rect x="551.8" y="393.6" width="9" height="9" fill="#0000b0" stroke="#7070b8" stroke-width="1"/><rect x="547.4" y="399.1" width="9" height="9" fill="#0000b0" stroke="#7070b8" stroke-width="1"/><rect x="543.5" y="405.1" width="9" height="9" fill="#0000b0" stroke="#7070b8" stroke-width="1"/><rect x="540.3" y="411.4" width="9" height="9" fill="#0000b0" stroke="#7070b8" stroke-width="1"/><rect x="537.8" y="418.0" width="9" height="9" fill="#0000b0" stroke="#7070b8" stroke-width="1"/><rect x="535.9" y="424.8" width="9" height="9" fill="#0000b0" stroke="#7070b8" stroke-width="1"/><rect x="534.8" y="431.8" width="9" height="9" fill="#0000b0" stroke="#7070b8" stroke-width="1"/><rect x="534.4" y="438.9" width="9" height="9" fill="#0000b0" stroke="#7070b8" stroke-width="1"/><rect x="534.8" y="445.9" width="9" height="9" fill="#0000b0" stroke="#7070b8" stroke-width="1"/><rect x="535.9" y="452.9" width="9" height="9" fill="#0000b0" stroke="#7070b8" stroke-width="1"/><rect x="537.8" y="459.7" width="9" height="9" fill="#0000b0" stroke="#7070b8" stroke-width="1"/><rect x="540.3" y="466.3" width="9" height="9" fill="#0000b0" stroke="#7070b8" stroke-width="1"/><rect x="543.5" y="472.7" width="9" height="9" fill="#0000b0" stroke="#7070b8" stroke-width="1"/><rect x="547.4" y="478.6" width="9" height="9" fill="#0000b0" stroke="#7070b8" stroke-width="1"/><rect x="551.8" y="484.1" width="9" height="9" fill="#0000b0" stroke="#7070b8" stroke-width="1"/><rect x="556.8" y="489.1" width="9" height="9" fill="#0000b0" stroke="#7070b8" stroke-width="1"/><rect x="562.3" y="493.5" width="9" height="9" fill="#0000b0" stroke="#7070b8" stroke-width="1"/><rect x="568.2" y="497.4" width="9" height="9" fill="#0000b0" stroke="#7070b8" stroke-width="1"/><rect x="574.6" y="500.6" width="9" height="9" fill="#0000b0" stroke="#7070b8" stroke-width="1"/><rect x="581.2" y="503.1" width="9" height="9" fill="#0000b0" stroke="#7070b8" stroke-width="1"/><rect x="588.0" y="505.0" width="9" height="9" fill="#0000b0" stroke="#7070b8" stroke-width="1"/><rect x="595.0" y="506.1" width="9" height="9" fill="#0000b0" stroke="#7070b8" stroke-width="1"/><rect x="602.0" y="506.5" width="9" height="9" fill="#0000b0" stroke="#7070b8" stroke-width="1"/><rect x="609.1" y="506.1" width="9" height="9" fill="#0000b0" stroke="#7070b8" stroke-width="1"/><rect x="616.1" y="505.0" width="9" height="9" fill="#0000b0" stroke="#7070b8" stroke-width="1"/><rect x="622.9" y="503.1" width="9" height="9" fill="#0000b0" stroke="#7070b8" stroke-width="1"/><rect x="629.5" y="500.6" width="9" height="9" fill="#0000b0" stroke="#7070b8" stroke-width="1"/><rect x="635.8" y="497.4" width="9" height="9" fill="#0000b0" stroke="#7070b8" stroke-width="1"/><rect x="641.8" y="493.5" width="9" height="9" fill="#0000b0" stroke="#7070b8" stroke-width="1"/><rect x="647.3" y="489.1" width="9" height="9" fill="#0000b0" stroke="#7070b8" stroke-width="1"/><rect x="652.3" y="484.1" width="9" height="9" fill="#0000b0" stroke="#7070b8" stroke-width="1"/><rect x="656.7" y="478.6" width="9" height="9" fill="#0000b0" stroke="#7070b8" stroke-width="1"/><rect x="660.6" y="472.7" width="9" height="9" fill="#0000b0" stroke="#7070b8" stroke-width="1"/><rect x="663.8" y="466.3" width="9" height="9" fill="#0000b0" stroke="#7070b8" stroke-width="1"/><rect x="666.3" y="459.7" width="9" height="9" fill="#0000b0" stroke="#7070b8" stroke-width="1"/><rect x="668.2" y="452.9" width="9" height="9" fill="#0000b0" stroke="#7070b8" stroke-width="1"/><rect x="669.3" y="445.9" width="9" height="9" fill="#0000b0" stroke="#7070b8" stroke-width="1"/><rect x="747.8" y="423.5" width="9" height="9" fill="#c8001e" stroke="#c87080" stroke-width="1"/><rect x="745.4" y="408.4" width="9" height="9" fill="#c8001e" stroke="#c87080" stroke-width="1"/><rect x="741.5" y="393.5" width="9" height="9" fill="#c8001e" stroke="#c87080" stroke-width="1"/><rect x="736.0" y="379.2" width="9" height="9" fill="#c8001e" stroke="#c87080" stroke-width="1"/><rect x="720.7" y="352.7" width="9" height="9" fill="#c8001e" stroke="#c87080" stroke-width="1"/><rect x="711.0" y="340.8" width="9" height="9" fill="#c8001e" stroke="#c87080" stroke-width="1"/><rect x="700.1" y="329.9" width="9" height="9" fill="#c8001e" stroke="#c87080" stroke-width="1"/><rect x="688.2" y="320.2" width="9" height="9" fill="#c8001e" stroke="#c87080" stroke-width="1"/><rect x="661.7" y="304.9" width="9" height="9" fill="#c8001e" stroke="#c87080" stroke-width="1"/><rect x="647.4" y="299.4" width="9" height="9" fill="#c8001e" stroke="#c87080" stroke-width="1"/><rect x="632.5" y="295.5" width="9" height="9" fill="#c8001e" stroke="#c87080" stroke-width="1"/><rect x="617.4" y="293.1" width="9" height="9" fill="#c8001e" stroke="#c87080" stroke-width="1"/><rect x="586.7" y="293.1" width="9" height="9" fill="#c8001e" stroke="#c87080" stroke-width="1"/><rect x="571.6" y="295.5" width="9" height="9" fill="#c8001e" stroke="#c87080" stroke-width="1"/><rect x="556.7" y="299.4" width="9" height="9" fill="#c8001e" stroke="#c87080" stroke-width="1"/><rect x="542.4" y="304.9" width="9" height="9" fill="#c8001e" stroke="#c87080" stroke-width="1"/><rect x="515.9" y="320.2" width="9" height="9" fill="#c8001e" stroke="#c87080" stroke-width="1"/><rect x="504.0" y="329.9" width="9" height="9" fill="#c8001e" stroke="#c87080" stroke-width="1"/><rect x="493.1" y="340.8" width="9" height="9" fill="#c8001e" stroke="#c87080" stroke-width="1"/><rect x="483.4" y="352.7" width="9" height="9" fill="#c8001e" stroke="#c87080" stroke-width="1"/><rect x="468.1" y="379.2" width="9" height="9" fill="#c8001e" stroke="#c87080" stroke-width="1"/><rect x="462.6" y="393.5" width="9" height="9" fill="#c8001e" stroke="#c87080" stroke-width="1"/><rect x="458.7" y="408.4" width="9" height="9" fill="#c8001e" stroke="#c87080" stroke-width="1"/><rect x="456.3" y="423.5" width="9" height="9" fill="#c8001e" stroke="#c87080" stroke-width="1"/><rect x="456.3" y="454.2" width="9" height="9" fill="#c8001e" stroke="#c87080" stroke-width="1"/><rect x="458.7" y="469.3" width="9" height="9" fill="#c8001e" stroke="#c87080" stroke-width="1"/><rect x="462.6" y="484.2" width="9" height="9" fill="#c8001e" stroke="#c87080" stroke-width="1"/><rect x="468.1" y="498.5" width="9" height="9" fill="#c8001e" stroke="#c87080" stroke-width="1"/><rect x="483.4" y="525.0" width="9" height="9" fill="#c8001e" stroke="#c87080" stroke-width="1"/><rect x="493.1" y="536.9" width="9" height="9" fill="#c8001e" stroke="#c87080" stroke-width="1"/><rect x="504.0" y="547.8" width="9" height="9" fill="#c8001e" stroke="#c87080" stroke-width="1"/><rect x="515.9" y="557.5" width="9" height="9" fill="#c8001e" stroke="#c87080" stroke-width="1"/><rect x="542.4" y="572.8" width="9" height="9" fill="#c8001e" stroke="#c87080" stroke-width="1"/><rect x="556.7" y="578.3" width="9" height="9" fill="#c8001e" stroke="#c87080" stroke-width="1"/><rect x="571.6" y="582.2" width="9" height="9" fill="#c8001e" stroke="#c87080" stroke-width="1"/><rect x="586.7" y="584.6" width="9" height="9" fill="#c8001e" stroke="#c87080" stroke-width="1"/><rect x="617.4" y="584.6" width="9" height="9" fill="#c8001e" stroke="#c87080" stroke-width="1"/><rect x="632.5" y="582.2" width="9" height="9" fill="#c8001e" stroke="#c87080" stroke-width="1"/><rect x="647.4" y="578.3" width="9" height="9" fill="#c8001e" stroke="#c87080" stroke-width="1"/><rect x="661.7" y="572.8" width="9" height="9" fill="#c8001e" stroke="#c87080" stroke-width="1"/><rect x="688.2" y="557.5" width="9" height="9" fill="#c8001e" stroke="#c87080" stroke-width="1"/><rect x="700.1" y="547.8" width="9" height="9" fill="#c8001e" stroke="#c87080" stroke-width="1"/><rect x="711.0" y="536.9" width="9" height="9" fill="#c8001e" stroke="#c87080" stroke-width="1"/><rect x="720.7" y="525.0" width="9" height="9" fill="#c8001e" stroke="#c87080" stroke-width="1"/><rect x="736.0" y="498.5" width="9" height="9" fill="#c8001e" stroke="#c87080" stroke-width="1"/><rect x="741.5" y="484.2" width="9" height="9" fill="#c8001e" stroke="#c87080" stroke-width="1"/><rect x="745.4" y="469.3" width="9" height="9" fill="#c8001e" stroke="#c87080" stroke-width="1"/><rect x="747.8" y="454.2" width="9" height="9" fill="#c8001e" stroke="#c87080" stroke-width="1"/><rect x="764.3" y="438.9" width="9" height="9" fill="#0000b0" stroke="#7070b8" stroke-width="1"/><rect x="754.4" y="434.6" width="9" height="9" fill="#0000b0" stroke="#7070b8" stroke-width="1"/><rect x="754.4" y="443.2" width="9" height="9" fill="#0000b0" stroke="#7070b8" stroke-width="1"/><rect x="744.6" y="438.9" width="9" height="9" fill="#0000b0" stroke="#7070b8" stroke-width="1"/><rect x="759.0" y="422.4" width="9" height="9" fill="#0000b0" stroke="#7070b8" stroke-width="1"/><rect x="756.4" y="406.0" width="9" height="9" fill="#0000b0" stroke="#7070b8" stroke-width="1"/><rect x="752.1" y="390.1" width="9" height="9" fill="#0000b0" stroke="#7070b8" stroke-width="1"/><rect x="746.2" y="374.7" width="9" height="9" fill="#0000b0" stroke="#7070b8" stroke-width="1"/><rect x="742.6" y="357.7" width="9" height="9" fill="#0000b0" stroke="#7070b8" stroke-width="1"/><rect x="731.9" y="358.9" width="9" height="9" fill="#0000b0" stroke="#7070b8" stroke-width="1"/><rect x="736.2" y="366.4" width="9" height="9" fill="#0000b0" stroke="#7070b8" stroke-width="1"/><rect x="725.5" y="367.6" width="9" height="9" fill="#0000b0" stroke="#7070b8" stroke-width="1"/><rect x="729.7" y="346.1" width="9" height="9" fill="#0000b0" stroke="#7070b8" stroke-width="1"/><rect x="719.3" y="333.3" width="9" height="9" fill="#0000b0" stroke="#7070b8" stroke-width="1"/><rect x="707.6" y="321.6" width="9" height="9" fill="#0000b0" stroke="#7070b8" stroke-width="1"/><rect x="694.8" y="311.2" width="9" height="9" fill="#0000b0" stroke="#7070b8" stroke-width="1"/><rect x="683.2" y="298.3" width="9" height="9" fill="#0000b0" stroke="#7070b8" stroke-width="1"/><rect x="674.5" y="304.7" width="9" height="9" fill="#0000b0" stroke="#7070b8" stroke-width="1"/><rect x="682.0" y="309.0" width="9" height="9" fill="#0000b0" stroke="#7070b8" stroke-width="1"/><rect x="673.3" y="315.4" width="9" height="9" fill="#0000b0" stroke="#7070b8" stroke-width="1"/><rect x="666.2" y="294.7" width="9" height="9" fill="#0000b0" stroke="#7070b8" stroke-width="1"/><rect x="650.8" y="288.8" width="9" height="9" fill="#0000b0" stroke="#7070b8" stroke-width="1"/><rect x="634.9" y="284.5" width="9" height="9" fill="#0000b0" stroke="#7070b8" stroke-width="1"/><rect x="618.5" y="281.9" width="9" height="9" fill="#0000b0" stroke="#7070b8" stroke-width="1"/><rect x="602.0" y="276.6" width="9" height="9" fill="#0000b0" stroke="#7070b8" stroke-width="1"/><rect x="597.8" y="286.5" width="9" height="9" fill="#0000b0" stroke="#7070b8" stroke-width="1"/><rect x="606.3" y="286.5" width="9" height="9" fill="#0000b0" stroke="#7070b8" stroke-width="1"/><rect x="602.0" y="296.2" width="9" height="9" fill="#0000b0" stroke="#7070b8" stroke-width="1"/><rect x="585.6" y="281.9" width="9" height="9" fill="#0000b0" stroke="#7070b8" stroke-width="1"/><rect x="569.2" y="284.5" width="9" height="9" fill="#0000b0" stroke="#7070b8" stroke-width="1"/><rect x="553.3" y="288.8" width="9" height="9" fill="#0000b0" stroke="#7070b8" stroke-width="1"/><rect x="537.9" y="294.7" width="9" height="9" fill="#0000b0" stroke="#7070b8" stroke-width="1"/><rect x="520.9" y="298.3" width="9" height="9" fill="#0000b0" stroke="#7070b8" stroke-width="1"/><rect x="522.1" y="309.0" width="9" height="9" fill="#0000b0" stroke="#7070b8" stroke-width="1"/><rect x="529.6" y="304.7" width="9" height="9" fill="#0000b0" stroke="#7070b8" stroke-width="1"/><rect x="530.8" y="315.4" width="9" height="9" fill="#0000b0" stroke="#7070b8" stroke-width="1"/><rect x="509.3" y="311.2" width="9" height="9" fill="#0000b0" stroke="#7070b8" stroke-width="1"/><rect x="496.5" y="321.6" width="9" height="9" fill="#0000b0" stroke="#7070b8" stroke-width="1"/><rect x="484.8" y="333.3" width="9" height="9" fill="#0000b0" stroke="#7070b8" stroke-width="1"/><rect x="474.4" y="346.1" width="9" height="9" fill="#0000b0" stroke="#7070b8" stroke-width="1"/><rect x="461.5" y="357.7" width="9" height="9" fill="#0000b0" stroke="#7070b8" stroke-width="1"/><rect x="467.9" y="366.4" width="9" height="9" fill="#0000b0" stroke="#7070b8" stroke-width="1"/><rect x="472.2" y="358.9" width="9" height="9" fill="#0000b0" stroke="#7070b8" stroke-width="1"/><rect x="478.6" y="367.6" width="9" height="9" fill="#0000b0" stroke="#7070b8" stroke-width="1"/><rect x="457.9" y="374.7" width="9" height="9" fill="#0000b0" stroke="#7070b8" stroke-width="1"/><rect x="452.0" y="390.1" width="9" height="9" fill="#0000b0" stroke="#7070b8" stroke-width="1"/><rect x="447.7" y="406.0" width="9" height="9" fill="#0000b0" stroke="#7070b8" stroke-width="1"/><rect x="445.1" y="422.4" width="9" height="9" fill="#0000b0" stroke="#7070b8" stroke-width="1"/><rect x="439.7" y="438.9" width="9" height="9" fill="#0000b0" stroke="#7070b8" stroke-width="1"/><rect x="449.6" y="443.2" width="9" height="9" fill="#0000b0" stroke="#7070b8" stroke-width="1"/><rect x="449.6" y="434.6" width="9" height="9" fill="#0000b0" stroke="#7070b8" stroke-width="1"/><rect x="459.4" y="438.9" width="9" height="9" fill="#0000b0" stroke="#7070b8" stroke-width="1"/><rect x="445.1" y="455.3" width="9" height="9" fill="#0000b0" stroke="#7070b8" stroke-width="1"/><rect x="447.7" y="471.7" width="9" height="9" fill="#0000b0" stroke="#7070b8" stroke-width="1"/><rect x="452.0" y="487.6" width="9" height="9" fill="#0000b0" stroke="#7070b8" stroke-width="1"/><rect x="457.9" y="503.0" width="9" height="9" fill="#0000b0" stroke="#7070b8" stroke-width="1"/><rect x="461.5" y="520.0" width="9" height="9" fill="#0000b0" stroke="#7070b8" stroke-width="1"/><rect x="472.2" y="518.8" width="9" height="9" fill="#0000b0" stroke="#7070b8" stroke-width="1"/><rect x="467.9" y="511.3" width="9" height="9" fill="#0000b0" stroke="#7070b8" stroke-width="1"/><rect x="478.6" y="510.2" width="9" height="9" fill="#0000b0" stroke="#7070b8" stroke-width="1"/><rect x="474.4" y="531.6" width="9" height="9" fill="#0000b0" stroke="#7070b8" stroke-width="1"/><rect x="484.8" y="544.4" width="9" height="9" fill="#0000b0" stroke="#7070b8" stroke-width="1"/><rect x="496.5" y="556.1" width="9" height="9" fill="#0000b0" stroke="#7070b8" stroke-width="1"/><rect x="509.3" y="566.5" width="9" height="9" fill="#0000b0" stroke="#7070b8" stroke-width="1"/><rect x="520.9" y="579.4" width="9" height="9" fill="#0000b0" stroke="#7070b8" stroke-width="1"/><rect x="529.6" y="573.0" width="9" height="9" fill="#0000b0" stroke="#7070b8" stroke-width="1"/><rect x="522.1" y="568.7" width="9" height="9" fill="#0000b0" stroke="#7070b8" stroke-width="1"/><rect x="530.7" y="562.3" width="9" height="9" fill="#0000b0" stroke="#7070b8" stroke-width="1"/><rect x="537.9" y="583.0" width="9" height="9" fill="#0000b0" stroke="#7070b8" stroke-width="1"/><rect x="553.3" y="588.9" width="9" height="9" fill="#0000b0" stroke="#7070b8" stroke-width="1"/><rect x="569.2" y="593.2" width="9" height="9" fill="#0000b0" stroke="#7070b8" stroke-width="1"/><rect x="585.6" y="595.8" width="9" height="9" fill="#0000b0" stroke="#7070b8" stroke-width="1"/><rect x="602.0" y="601.2" width="9" height="9" fill="#0000b0" stroke="#7070b8" stroke-width="1"/><rect x="606.3" y="591.2" width="9" height="9" fill="#0000b0" stroke="#7070b8" stroke-width="1"/><rect x="597.8" y="591.2" width="9" height="9" fill="#0000b0" stroke="#7070b8" stroke-width="1"/><rect x="602.0" y="581.5" width="9" height="9" fill="#0000b0" stroke="#7070b8" stroke-width="1"/><rect x="618.5" y="595.8" width="9" height="9" fill="#0000b0" stroke="#7070b8" stroke-width="1"/><rect x="634.9" y="593.2" width="9" height="9" fill="#0000b0" stroke="#7070b8" stroke-width="1"/><rect x="650.8" y="588.9" width="9" height="9" fill="#0000b0" stroke="#7070b8" stroke-width="1"/><rect x="666.2" y="583.0" width="9" height="9" fill="#0000b0" stroke="#7070b8" stroke-width="1"/><rect x="683.2" y="579.4" width="9" height="9" fill="#0000b0" stroke="#7070b8" stroke-width="1"/><rect x="682.0" y="568.7" width="9" height="9" fill="#0000b0" stroke="#7070b8" stroke-width="1"/><rect x="674.5" y="573.0" width="9" height="9" fill="#0000b0" stroke="#7070b8" stroke-width="1"/><rect x="673.3" y="562.3" width="9" height="9" fill="#0000b0" stroke="#7070b8" stroke-width="1"/><rect x="694.8" y="566.5" width="9" height="9" fill="#0000b0" stroke="#7070b8" stroke-width="1"/><rect x="707.6" y="556.1" width="9" height="9" fill="#0000b0" stroke="#7070b8" stroke-width="1"/><rect x="719.3" y="544.4" width="9" height="9" fill="#0000b0" stroke="#7070b8" stroke-width="1"/><rect x="729.7" y="531.6" width="9" height="9" fill="#0000b0" stroke="#7070b8" stroke-width="1"/><rect x="742.6" y="520.0" width="9" height="9" fill="#0000b0" stroke="#7070b8" stroke-width="1"/><rect x="736.2" y="511.3" width="9" height="9" fill="#0000b0" stroke="#7070b8" stroke-width="1"/><rect x="731.9" y="518.8" width="9" height="9" fill="#0000b0" stroke="#7070b8" stroke-width="1"/><rect x="725.5" y="510.2" width="9" height="9" fill="#0000b0" stroke="#7070b8" stroke-width="1"/><rect x="746.2" y="503.0" width="9" height="9" fill="#0000b0" stroke="#7070b8" stroke-width="1"/><rect x="752.1" y="487.6" width="9" height="9" fill="#0000b0" stroke="#7070b8" stroke-width="1"/><rect x="756.4" y="471.7" width="9" height="9" fill="#0000b0" stroke="#7070b8" stroke-width="1"/><rect x="759.0" y="455.3" width="9" height="9" fill="#0000b0" stroke="#7070b8" stroke-width="1"/><rect x="663.1" y="333.0" width="9" height="9" fill="#0000b0" stroke="#7070b8" stroke-width="1"/><rect x="707.9" y="377.8" width="9" height="9" fill="#0000b0" stroke="#7070b8" stroke-width="1"/><rect x="724.2" y="438.9" width="9" height="9" fill="#0000b0" stroke="#7070b8" stroke-width="1"/><rect x="707.9" y="500.0" width="9" height="9" fill="#0000b0" stroke="#7070b8" stroke-width="1"/><rect x="663.1" y="544.7" width="9" height="9" fill="#0000b0" stroke="#7070b8" stroke-width="1"/><rect x="602.0" y="561.1" width="9" height="9" fill="#0000b0" stroke="#7070b8" stroke-width="1"/><rect x="540.9" y="544.7" width="9" height="9" fill="#0000b0" stroke="#7070b8" stroke-width="1"/><rect x="496.2" y="500.0" width="9" height="9" fill="#0000b0" stroke="#7070b8" stroke-width="1"/><rect x="479.8" y="438.9" width="9" height="9" fill="#0000b0" stroke="#7070b8" stroke-width="1"/><rect x="496.2" y="377.8" width="9" height="9" fill="#0000b0" stroke="#7070b8" stroke-width="1"/><rect x="540.9" y="333.0" width="9" height="9" fill="#0000b0" stroke="#7070b8" stroke-width="1"/><rect x="602.0" y="316.7" width="9" height="9" fill="#0000b0" stroke="#7070b8" stroke-width="1"/><rect x="607.0" y="438.9" width="9" height="9" fill="#0a86b2" stroke="#6aa0b4" stroke-width="1"/><rect x="602.0" y="433.9" width="9" height="9" fill="#0a86b2" stroke="#6aa0b4" stroke-width="1"/><rect x="597.0" y="438.9" width="9" height="9" fill="#0a86b2" stroke="#6aa0b4" stroke-width="1"/><rect x="602.0" y="443.9" width="9" height="9" fill="#0a86b2" stroke="#6aa0b4" stroke-width="1"/><g stroke="#c00000" stroke-width="1.2" fill="none"><line x1="398.3" y1="631.6" x2="438.3" y2="631.6"/><line x1="418.3" y1="611.6" x2="418.3" y2="651.6"/><circle cx="418.3" cy="631.6" r="5.2"/></g><defs><radialGradient id="rg" gradientUnits="userSpaceOnUse" cx="870.4" cy="611.8" r="40"><stop offset="0.76" stop-color="#000" stop-opacity="0"/><stop offset="0.80" stop-color="#1e252c"/><stop offset="0.85" stop-color="#5a6876"/><stop offset="0.89" stop-color="#3e4a56"/><stop offset="0.93" stop-color="#6a7a88"/><stop offset="0.97" stop-color="#4a5866"/><stop offset="1" stop-color="#000" stop-opacity="0"/></radialGradient></defs><circle cx="870.4" cy="611.8" r="35" fill="none" stroke="url(#rg)" stroke-width="10"/><path d="M870.6 612.4 L870.6 634.6 L875.4 629.8 L880.0 639.2 L883.6 637.6 L879.0 628.4 L885.8 628.4 Z" fill="#fff" stroke="#fff" stroke-width="3.2" stroke-linejoin="round"/><path d="M870.6 612.4 L870.6 634.6 L875.4 629.8 L880.0 639.2 L883.6 637.6 L879.0 628.4 L885.8 628.4 Z" fill="#fff" stroke="#000" stroke-width="1.1" stroke-linejoin="round"/></svg><div class="a" style="left:98px;top:152px;width:1px;height:3px;background:#555"></div><div class="a" style="left:117px;top:148px;width:1px;height:7px;background:#555"></div><div class="rl" style="left:97.1px;top:133px">-160</div><div class="a" style="left:135px;top:152px;width:1px;height:3px;background:#555"></div><div class="a" style="left:154px;top:148px;width:1px;height:7px;background:#555"></div><div class="rl" style="left:134.8px;top:133px">-140</div><div class="a" style="left:173px;top:152px;width:1px;height:3px;background:#555"></div><div class="a" style="left:192px;top:148px;width:1px;height:7px;background:#555"></div><div class="rl" style="left:172.4px;top:133px">-120</div><div class="a" style="left:211px;top:152px;width:1px;height:3px;background:#555"></div><div class="a" style="left:230px;top:148px;width:1px;height:7px;background:#555"></div><div class="rl" style="left:210.1px;top:133px">-100</div><div class="a" style="left:248px;top:152px;width:1px;height:3px;background:#555"></div><div class="a" style="left:267px;top:148px;width:1px;height:7px;background:#555"></div><div class="rl" style="left:247.7px;top:133px">-80</div><div class="a" style="left:286px;top:152px;width:1px;height:3px;background:#555"></div><div class="a" style="left:305px;top:148px;width:1px;height:7px;background:#555"></div><div class="rl" style="left:285.4px;top:133px">-60</div><div class="a" style="left:324px;top:152px;width:1px;height:3px;background:#555"></div><div class="a" style="left:343px;top:148px;width:1px;height:7px;background:#555"></div><div class="rl" style="left:323.0px;top:133px">-40</div><div class="a" style="left:361px;top:152px;width:1px;height:3px;background:#555"></div><div class="a" style="left:380px;top:148px;width:1px;height:7px;background:#555"></div><div class="rl" style="left:360.7px;top:133px">-20</div><div class="a" style="left:399px;top:152px;width:1px;height:3px;background:#555"></div><div class="a" style="left:418px;top:148px;width:1px;height:7px;background:#555"></div><div class="rl" style="left:398.3px;top:133px">0</div><div class="a" style="left:437px;top:152px;width:1px;height:3px;background:#555"></div><div class="a" style="left:455px;top:148px;width:1px;height:7px;background:#555"></div><div class="rl" style="left:435.9px;top:133px">20</div><div class="a" style="left:474px;top:152px;width:1px;height:3px;background:#555"></div><div class="a" style="left:493px;top:148px;width:1px;height:7px;background:#555"></div><div class="rl" style="left:473.6px;top:133px">40</div><div class="a" style="left:512px;top:152px;width:1px;height:3px;background:#555"></div><div class="a" style="left:531px;top:148px;width:1px;height:7px;background:#555"></div><div class="rl" style="left:511.2px;top:133px">60</div><div class="a" style="left:550px;top:152px;width:1px;height:3px;background:#555"></div><div class="a" style="left:568px;top:148px;width:1px;height:7px;background:#555"></div><div class="rl" style="left:548.9px;top:133px">80</div><div class="a" style="left:587px;top:152px;width:1px;height:3px;background:#555"></div><div class="a" style="left:606px;top:148px;width:1px;height:7px;background:#555"></div><div class="rl" style="left:586.5px;top:133px">100</div><div class="a" style="left:625px;top:152px;width:1px;height:3px;background:#555"></div><div class="a" style="left:644px;top:148px;width:1px;height:7px;background:#555"></div><div class="rl" style="left:624.2px;top:133px">120</div><div class="a" style="left:663px;top:152px;width:1px;height:3px;background:#555"></div><div class="a" style="left:681px;top:148px;width:1px;height:7px;background:#555"></div><div class="rl" style="left:661.9px;top:133px">140</div><div class="a" style="left:700px;top:152px;width:1px;height:3px;background:#555"></div><div class="a" style="left:719px;top:148px;width:1px;height:7px;background:#555"></div><div class="rl" style="left:699.5px;top:133px">160</div><div class="a" style="left:738px;top:152px;width:1px;height:3px;background:#555"></div><div class="a" style="left:757px;top:148px;width:1px;height:7px;background:#555"></div><div class="rl" style="left:737.2px;top:133px">180</div><div class="a" style="left:775px;top:152px;width:1px;height:3px;background:#555"></div><div class="a" style="left:794px;top:148px;width:1px;height:7px;background:#555"></div><div class="rl" style="left:774.8px;top:133px">200</div><div class="a" style="left:813px;top:152px;width:1px;height:3px;background:#555"></div><div class="a" style="left:832px;top:148px;width:1px;height:7px;background:#555"></div><div class="rl" style="left:812.5px;top:133px">220</div><div class="a" style="left:851px;top:152px;width:1px;height:3px;background:#555"></div><div class="a" style="left:870px;top:148px;width:1px;height:7px;background:#555"></div><div class="rl" style="left:850.1px;top:133px">240</div><div class="a" style="left:888px;top:152px;width:1px;height:3px;background:#555"></div><div class="a" style="left:907px;top:148px;width:1px;height:7px;background:#555"></div><div class="rl" style="left:887.8px;top:133px">260</div><div class="a" style="left:926px;top:152px;width:1px;height:3px;background:#555"></div><div class="a" style="left:945px;top:148px;width:1px;height:7px;background:#555"></div><div class="rl" style="left:925.4px;top:133px">280</div><div class="a" style="left:964px;top:152px;width:1px;height:3px;background:#555"></div><div class="a" style="left:983px;top:148px;width:1px;height:7px;background:#555"></div><div class="rl" style="left:963.0px;top:133px">300</div><div class="a" style="left:1001px;top:152px;width:1px;height:3px;background:#555"></div><div class="a" style="left:1020px;top:148px;width:1px;height:7px;background:#555"></div><div class="rl" style="left:1000.7px;top:133px">320</div><div class="a" style="left:1039px;top:152px;width:1px;height:3px;background:#555"></div><div class="a" style="left:1058px;top:148px;width:1px;height:7px;background:#555"></div><div class="rl" style="left:1038.4px;top:133px">340</div><div class="a" style="left:1077px;top:152px;width:1px;height:3px;background:#555"></div><div class="a" style="left:1096px;top:148px;width:1px;height:7px;background:#555"></div><div class="rl" style="left:1076.0px;top:133px">360</div><div class="a" style="left:1114px;top:152px;width:1px;height:3px;background:#555"></div><div class="a" style="left:92px;top:725px;width:3px;height:1px;background:#555"></div><div class="a" style="left:88px;top:706px;width:7px;height:1px;background:#555"></div><div class="rl" style="left:58.5px;top:701.7px;transform:rotate(-90deg)">-40</div><div class="a" style="left:92px;top:688px;width:3px;height:1px;background:#555"></div><div class="a" style="left:88px;top:669px;width:7px;height:1px;background:#555"></div><div class="rl" style="left:58.5px;top:664.0px;transform:rotate(-90deg)">-20</div><div class="a" style="left:92px;top:650px;width:3px;height:1px;background:#555"></div><div class="a" style="left:88px;top:631px;width:7px;height:1px;background:#555"></div><div class="rl" style="left:58.5px;top:626.4px;transform:rotate(-90deg)">0</div><div class="a" style="left:92px;top:612px;width:3px;height:1px;background:#555"></div><div class="a" style="left:88px;top:593px;width:7px;height:1px;background:#555"></div><div class="rl" style="left:58.5px;top:588.8px;transform:rotate(-90deg)">20</div><div class="a" style="left:92px;top:575px;width:3px;height:1px;background:#555"></div><div class="a" style="left:88px;top:556px;width:7px;height:1px;background:#555"></div><div class="rl" style="left:58.5px;top:551.1px;transform:rotate(-90deg)">40</div><div class="a" style="left:92px;top:537px;width:3px;height:1px;background:#555"></div><div class="a" style="left:88px;top:518px;width:7px;height:1px;background:#555"></div><div class="rl" style="left:58.5px;top:513.4px;transform:rotate(-90deg)">60</div><div class="a" style="left:92px;top:499px;width:3px;height:1px;background:#555"></div><div class="a" style="left:88px;top:481px;width:7px;height:1px;background:#555"></div><div class="rl" style="left:58.5px;top:475.8px;transform:rotate(-90deg)">80</div><div class="a" style="left:92px;top:462px;width:3px;height:1px;background:#555"></div><div class="a" style="left:88px;top:443px;width:7px;height:1px;background:#555"></div><div class="rl" style="left:58.5px;top:438.2px;transform:rotate(-90deg)">100</div><div class="a" style="left:92px;top:424px;width:3px;height:1px;background:#555"></div><div class="a" style="left:88px;top:405px;width:7px;height:1px;background:#555"></div><div class="rl" style="left:58.5px;top:400.5px;transform:rotate(-90deg)">120</div><div class="a" style="left:92px;top:386px;width:3px;height:1px;background:#555"></div><div class="a" style="left:88px;top:368px;width:7px;height:1px;background:#555"></div><div class="rl" style="left:58.5px;top:362.9px;transform:rotate(-90deg)">140</div><div class="a" style="left:92px;top:349px;width:3px;height:1px;background:#555"></div><div class="a" style="left:88px;top:330px;width:7px;height:1px;background:#555"></div><div class="rl" style="left:58.5px;top:325.2px;transform:rotate(-90deg)">160</div><div class="a" style="left:92px;top:311px;width:3px;height:1px;background:#555"></div><div class="a" style="left:88px;top:292px;width:7px;height:1px;background:#555"></div><div class="rl" style="left:58.5px;top:287.6px;transform:rotate(-90deg)">180</div><div class="a" style="left:92px;top:273px;width:3px;height:1px;background:#555"></div><div class="a" style="left:88px;top:255px;width:7px;height:1px;background:#555"></div><div class="rl" style="left:58.5px;top:249.9px;transform:rotate(-90deg)">200</div><div class="a" style="left:92px;top:236px;width:3px;height:1px;background:#555"></div><div class="a" style="left:88px;top:217px;width:7px;height:1px;background:#555"></div><div class="rl" style="left:58.5px;top:212.2px;transform:rotate(-90deg)">220</div><div class="a" style="left:92px;top:198px;width:3px;height:1px;background:#555"></div><div class="a" style="left:88px;top:179px;width:7px;height:1px;background:#555"></div><div class="rl" style="left:58.5px;top:174.6px;transform:rotate(-90deg)">240</div><div class="a" style="left:92px;top:160px;width:3px;height:1px;background:#555"></div><svg class="a" style="left:864px;top:145px" width="12" height="8" viewBox="0 0 12 8"><path d="M1 1 L11 1 L6 7 Z" fill="#000"/></svg><svg class="a" style="left:84px;top:605.5px" width="8" height="12" viewBox="0 0 8 12"><path d="M1 1 L1 11 L7 6 Z" fill="#000"/></svg><div class="a" style="left:1134px;top:107px;width:21px;height:690px;background:linear-gradient(90deg,#ececec 0,#ececec 9px,#e4e4e4 9px)"></div><div class="a" style="left:1135px;top:333px;width:20px;height:157px;background:#1b84f9;border-radius:5px 0 0 5px"></div><div class="a" style="left:1135px;top:495px;width:20px;height:80px;background:#d6d6d6;border-radius:5px 0 0 5px"></div><div class="a" style="left:1145px;top:411.5px;width:160px;height:16px;margin-left:-80px;margin-top:-8px;transform:rotate(-90deg);text-align:center;font-size:13.5px;line-height:16px;color:#fff;white-space:nowrap">Eigenschappen-editor</div><div class="a" style="left:1145px;top:535px;width:100px;height:16px;margin-left:-50px;margin-top:-8px;transform:rotate(-90deg);text-align:center;font-size:13.5px;line-height:16px;color:#333;white-space:nowrap">Lagenlijst</div><div class="a" style="left:1155px;top:107px;width:300px;height:691px;background:#ececec;border-left:1px solid #c6c6c6;border-right:1px solid #c6c6c6;border-top:1px solid #c0c0c0"></div><div class="a" style="left:1156px;top:108px;width:298px;height:23px;background:linear-gradient(#ececec,#dedede);border-bottom:1px solid #c4c4c4"></div><div class="a" style="left:1157px;top:111px;width:14px;height:14px;border-radius:50%;background:#5c5c5c"></div><svg class="a" style="left:1157px;top:111px;" width="14" height="14" viewBox="0 0 14 14"><path d="M4.3 4.3 L9.7 9.7 M9.7 4.3 L4.3 9.7" stroke="#e8e8e8" stroke-width="1.8"/></svg><div class="a" style="left:1175px;top:111px;width:14px;height:14px;border-radius:50%;background:#5c5c5c"></div><svg class="a" style="left:1175px;top:111px;" width="14" height="14" viewBox="0 0 14 14"><rect x="5.5" y="3.8" width="5" height="4" fill="none" stroke="#e8e8e8" stroke-width="1.2"/><rect x="3.5" y="6.2" width="5" height="4" fill="#5c5c5c" stroke="#e8e8e8" stroke-width="1.2"/></svg><div class="a" style="left:1155px;top:112.5px;width:300px;text-align:center;font-size:11.2px;line-height:12px;letter-spacing:0.45px;color:#2a2a2a;padding-left:34px">Eigenschappen-editor</div><div class="a" style="left:919.5px;top:147.0px;width:300px;text-align:right;font-size:13.3px;line-height:13.3px;color:#1e1e1e;white-space:nowrap;">Selectie:</div><div class="a" style="left:1228px;top:143.5px;width:213.5px;height:21.0px;background:#fff;border:1px solid #cfd6de;border-radius:5px"></div><div class="a" style="left:1422.5px;top:146.0px;width:16px;height:16px;background:#1a7efb;border-radius:4px"><svg width="16" height="16" viewBox="0 0 16 16"><path d="M5 6 L8 3.2 L11 6 M5 10 L8 12.8 L11 10" fill="none" stroke="#fff" stroke-width="1.4"/></svg></div><div class="a" style="left:1231.5px;top:147.0px;font-size:13.3px;line-height:13.3px;color:#1e1e1e;white-space:nowrap;">Alle (149)</div><div class="a" style="left:1175.5px;top:169.6px;font-size:11.5px;line-height:11.5px;color:#222;white-space:nowrap;">Algemeene eigenschappen</div><div class="a" style="left:1168.5px;top:183.5px;width:273px;height:185px;background:#e4e4e4;border-radius:6px;border:1px solid #dedede"></div><div class="a" style="left:967.5px;top:199.0px;width:300px;text-align:right;font-size:13.3px;line-height:13.3px;color:#1e1e1e;white-space:nowrap;">Laag:</div><div class="a" style="left:1270.5px;top:195.5px;width:134.0px;height:21.0px;background:#fff;border:1px solid #cfd6de;border-radius:5px"></div><div class="a" style="left:1385.5px;top:198.0px;width:16px;height:16px;background:#1a7efb;border-radius:4px"><svg width="16" height="16" viewBox="0 0 16 16"><path d="M5 6 L8 3.2 L11 6 M5 10 L8 12.8 L11 10" fill="none" stroke="#fff" stroke-width="1.4"/></svg></div><svg class="a" style="left:1273px;top:201px;" width="18" height="11" viewBox="0 0 18 11"><rect x="1.5" y="1" width="15" height="9" fill="none" stroke="#222" stroke-width="1.1"/></svg><div class="a" style="left:1296px;top:199.0px;font-size:13.3px;line-height:13.3px;color:#1e1e1e;white-space:nowrap;">0</div><div class="a" style="left:1407.5px;top:193.5px;width:25.5px;height:25px;border:1px solid #a8a8a8;background:linear-gradient(#fafafa,#ececec)"></div><svg class="a" style="left:1410px;top:196px;" width="20" height="20" viewBox="0 0 20 20"><path d="M5 6.3 H15 M5 10 H15 M5 13.7 H15" stroke="#6a6a6a" stroke-width="1.5"/></svg><div class="a" style="left:967.5px;top:225.0px;width:300px;text-align:right;font-size:13.3px;line-height:13.3px;color:#1e1e1e;white-space:nowrap;">Kleur:</div><div class="a" style="left:1270.5px;top:221.5px;width:162.0px;height:21.0px;background:#fff;border:1px solid #cfd6de;border-radius:5px"></div><div class="a" style="left:1413.5px;top:224.0px;width:16px;height:16px;background:#1a7efb;border-radius:4px"><svg width="16" height="16" viewBox="0 0 16 16"><path d="M5 6 L8 3.2 L11 6 M5 10 L8 12.8 L11 10" fill="none" stroke="#fff" stroke-width="1.4"/></svg></div><svg class="a" style="left:1273px;top:227px;" width="18" height="11" viewBox="0 0 18 11"><rect x="1.5" y="1" width="15" height="9" fill="none" stroke="#222" stroke-width="1.1"/></svg><div class="a" style="left:1296px;top:225.0px;font-size:13.3px;line-height:13.3px;color:#1e1e1e;white-space:nowrap;">Door laag bepaald</div><div class="a" style="left:967.5px;top:249.0px;width:300px;text-align:right;font-size:13.3px;line-height:13.3px;color:#1e1e1e;white-space:nowrap;">Lijndikte:</div><div class="a" style="left:1270.5px;top:245.5px;width:162.0px;height:21.0px;background:#fff;border:1px solid #cfd6de;border-radius:5px"></div><div class="a" style="left:1413.5px;top:248.0px;width:16px;height:16px;background:#1a7efb;border-radius:4px"><svg width="16" height="16" viewBox="0 0 16 16"><path d="M5 6 L8 3.2 L11 6 M5 10 L8 12.8 L11 10" fill="none" stroke="#fff" stroke-width="1.4"/></svg></div><div class="a" style="left:1274px;top:255.5px;width:16px;height:1px;background:#222"></div><div class="a" style="left:1296px;top:249.0px;font-size:13.3px;line-height:13.3px;color:#1e1e1e;white-space:nowrap;">Door laag bepaald</div><div class="a" style="left:967.5px;top:272.5px;width:300px;text-align:right;font-size:13.3px;line-height:13.3px;color:#1e1e1e;white-space:nowrap;">Lijntype:</div><div class="a" style="left:1270.5px;top:269.5px;width:162.0px;height:21.0px;background:#fff;border:1px solid #cfd6de;border-radius:5px"></div><div class="a" style="left:1413.5px;top:272.0px;width:16px;height:16px;background:#1a7efb;border-radius:4px"><svg width="16" height="16" viewBox="0 0 16 16"><path d="M5 6 L8 3.2 L11 6 M5 10 L8 12.8 L11 10" fill="none" stroke="#fff" stroke-width="1.4"/></svg></div><div class="a" style="left:1274px;top:272.5px;font-size:13.3px;line-height:13.3px;color:#1e1e1e;white-space:nowrap;">Door laag bepaald</div><div class="a" style="left:967.5px;top:296.5px;width:300px;text-align:right;font-size:13.3px;line-height:13.3px;color:#1e1e1e;white-space:nowrap;">Lijntypeschaal:</div><div class="a" style="left:1270.5px;top:294.5px;width:162px;height:19.0px;background:#fff;border-bottom:1px solid #c8c8c8;border-top:1px solid #f0f0f0"></div><div class="a" style="left:1272.5px;top:296.5px;font-size:13.3px;line-height:13.3px;color:#1e1e1e;white-space:nowrap;">1</div><div class="a" style="left:967.5px;top:319.5px;width:300px;text-align:right;font-size:13.3px;line-height:13.3px;color:#1e1e1e;white-space:nowrap;">Tekenvolgorde:</div><div class="a" style="left:1270.5px;top:317.5px;width:162px;height:19.0px;background:#fff;border-bottom:1px solid #c8c8c8;border-top:1px solid #f0f0f0"></div><div class="a" style="left:1272.5px;top:319.5px;font-size:13.3px;line-height:13.3px;color:#1e1e1e;white-space:nowrap;">*VARIEERT*</div><div class="a" style="left:967.5px;top:342.5px;width:300px;text-align:right;font-size:13.3px;line-height:13.3px;color:#1e1e1e;white-space:nowrap;">Handle:</div><div class="a" style="left:1270.5px;top:340.5px;width:162px;height:18.5px;background:#fff;border-bottom:1px solid #c8c8c8;border-top:1px solid #f0f0f0"></div><div class="a" style="left:1272.5px;top:342.5px;font-size:13.3px;line-height:13.3px;color:#b4b4b4;white-space:nowrap;">*VARIEERT*</div><div class="a" style="left:1175.5px;top:374.1px;font-size:11.5px;line-height:11.5px;color:#222;white-space:nowrap;">Specifieke eigenschappen</div><div class="a" style="left:1168.5px;top:387px;width:273px;height:18.5px;background:#e4e4e4;border-radius:6px;border:1px solid #dedede"></div><div class="a" style="left:1175.5px;top:411.1px;font-size:11.5px;line-height:11.5px;color:#222;white-space:nowrap;">Gebruiker gedefinieerd</div><div class="a" style="left:1168.5px;top:424.5px;width:273px;height:52px;background:#e4e4e4;border-radius:6px;border:1px solid #dedede"></div><div class="a" style="left:1405px;top:440.5px;width:22px;height:21.5px;border:1px solid #b4b4b4;background:linear-gradient(#fafafa,#ececec)"></div><svg class="a" style="left:1405px;top:440.5px;" width="22" height="22" viewBox="0 0 22 22"><path d="M11 6 V16 M6 11 H16" stroke="#d80000" stroke-width="2.2"/></svg><div class="a" style="left:1455px;top:107px;width:45px;height:691px;background:linear-gradient(90deg,#ececec,#e6e6e6 40%,#d8d8d8 75%,#bdbdbd)"></div><div class="a" style="left:1463px;top:116px;width:2px;height:2px;background:#a8a8a8"></div><div class="a" style="left:1469px;top:116px;width:2px;height:2px;background:#a8a8a8"></div><div class="a" style="left:1475px;top:116px;width:2px;height:2px;background:#a8a8a8"></div><div class="a" style="left:1481px;top:116px;width:2px;height:2px;background:#a8a8a8"></div><div class="a" style="left:1487px;top:116px;width:2px;height:2px;background:#a8a8a8"></div><div class="a" style="left:1457px;top:260px;width:1px;height:1px;background:#7a7a7a"></div><div class="a" style="left:1460px;top:260px;width:1px;height:1px;background:#7a7a7a"></div><div class="a" style="left:1463px;top:260px;width:1px;height:1px;background:#7a7a7a"></div><div class="a" style="left:1466px;top:260px;width:1px;height:1px;background:#7a7a7a"></div><div class="a" style="left:1469px;top:260px;width:1px;height:1px;background:#7a7a7a"></div><div class="a" style="left:1472px;top:260px;width:1px;height:1px;background:#7a7a7a"></div><div class="a" style="left:1475px;top:260px;width:1px;height:1px;background:#7a7a7a"></div><div class="a" style="left:1478px;top:260px;width:1px;height:1px;background:#7a7a7a"></div><div class="a" style="left:1481px;top:260px;width:1px;height:1px;background:#7a7a7a"></div><div class="a" style="left:1484px;top:260px;width:1px;height:1px;background:#7a7a7a"></div><div class="a" style="left:1487px;top:260px;width:1px;height:1px;background:#7a7a7a"></div><div class="a" style="left:1490px;top:260px;width:1px;height:1px;background:#7a7a7a"></div><div class="a" style="left:1493px;top:260px;width:1px;height:1px;background:#7a7a7a"></div><div class="a" style="left:1496px;top:260px;width:1px;height:1px;background:#7a7a7a"></div><div class="a" style="left:1499px;top:260px;width:1px;height:1px;background:#7a7a7a"></div><div class="a" style="left:1457px;top:410px;width:1px;height:1px;background:#7a7a7a"></div><div class="a" style="left:1460px;top:410px;width:1px;height:1px;background:#7a7a7a"></div><div class="a" style="left:1463px;top:410px;width:1px;height:1px;background:#7a7a7a"></div><div class="a" style="left:1466px;top:410px;width:1px;height:1px;background:#7a7a7a"></div><div class="a" style="left:1469px;top:410px;width:1px;height:1px;background:#7a7a7a"></div><div class="a" style="left:1472px;top:410px;width:1px;height:1px;background:#7a7a7a"></div><div class="a" style="left:1475px;top:410px;width:1px;height:1px;background:#7a7a7a"></div><div class="a" style="left:1478px;top:410px;width:1px;height:1px;background:#7a7a7a"></div><div class="a" style="left:1481px;top:410px;width:1px;height:1px;background:#7a7a7a"></div><div class="a" style="left:1484px;top:410px;width:1px;height:1px;background:#7a7a7a"></div><div class="a" style="left:1487px;top:410px;width:1px;height:1px;background:#7a7a7a"></div><div class="a" style="left:1490px;top:410px;width:1px;height:1px;background:#7a7a7a"></div><div class="a" style="left:1493px;top:410px;width:1px;height:1px;background:#7a7a7a"></div><div class="a" style="left:1496px;top:410px;width:1px;height:1px;background:#7a7a7a"></div><div class="a" style="left:1499px;top:410px;width:1px;height:1px;background:#7a7a7a"></div><div class="a" style="left:1456px;top:120px;width:42px;height:43px;border-radius:5px;background:#b8b8b8"></div><div class="a" style="left:1456px;top:268.5px;width:42px;height:43px;border-radius:5px;background:#b8b8b8"></div><div class="a" style="left:1456px;top:418px;width:42px;height:43px;border-radius:5px;background:#b8b8b8"></div><svg class="a" style="left:1462px;top:126.5px;" width="30" height="29" viewBox="0 0 30 29"><rect x="1" y="1" width="28" height="27" fill="#fff" stroke="#111" stroke-width="1"/><rect x="1" y="1" width="28" height="4.5" fill="#000"/><rect x="2.2" y="2" width="3" height="2.6" fill="#fff"/><path d="M9 11 L15 9 L15 22 L9 24 Z" fill="#999" stroke="#333" stroke-width="0.8"/><path d="M12 10 L21 7 L21 20 L12 23 Z" fill="#f4f4f4" stroke="#333" stroke-width="0.8"/><path d="M14.5 19 L19 12 L19 19 Z" fill="none" stroke="#e02020" stroke-width="1"/></svg><svg class="a" style="left:1462px;top:173.5px;" width="30" height="29" viewBox="0 0 30 29"><rect x="1" y="1" width="28" height="27" fill="#fff" stroke="#111" stroke-width="1"/><rect x="1" y="1" width="28" height="4.5" fill="#000"/><rect x="2.2" y="2" width="3" height="2.6" fill="#fff"/><rect x="7" y="12" width="11" height="8" fill="#f4e4b0" stroke="#333" stroke-width="0.8"/><circle cx="18" cy="19" r="5" fill="#f4e8c0" stroke="#333" stroke-width="0.8"/></svg><svg class="a" style="left:1462px;top:219.5px;" width="30" height="29" viewBox="0 0 30 29"><rect x="1" y="1" width="28" height="27" fill="#fff" stroke="#111" stroke-width="1"/><rect x="1" y="1" width="28" height="4.5" fill="#000"/><rect x="2.2" y="2" width="3" height="2.6" fill="#fff"/><rect x="6" y="11" width="18" height="12" rx="2.5" fill="#f4f4f4" stroke="#b8cce4" stroke-width="1"/></svg><svg class="a" style="left:1462px;top:275.5px;" width="30" height="29" viewBox="0 0 30 29"><rect x="1" y="1" width="28" height="27" fill="#fff" stroke="#111" stroke-width="1"/><rect x="1" y="1" width="28" height="4.5" fill="#000"/><rect x="2.2" y="2" width="3" height="2.6" fill="#fff"/><rect x="5" y="9" width="4" height="3" fill="#111"/><rect x="5" y="15" width="4" height="3" fill="#111"/><rect x="5" y="21" width="4" height="3" fill="#111"/><rect x="11" y="8.5" width="15" height="3.5" fill="none" stroke="#333" stroke-width="0.8"/><rect x="11" y="14.5" width="15" height="3.5" fill="none" stroke="#333" stroke-width="0.8"/><rect x="11" y="20.5" width="15" height="3.5" fill="none" stroke="#333" stroke-width="0.8"/></svg><svg class="a" style="left:1462px;top:322.5px;" width="30" height="29" viewBox="0 0 30 29"><rect x="1" y="1" width="28" height="27" fill="#fff" stroke="#111" stroke-width="1"/><rect x="1" y="1" width="28" height="4.5" fill="#000"/><rect x="2.2" y="2" width="3" height="2.6" fill="#fff"/><path d="M7 9 H23 L17 16 V24 L13 22 V16 Z" fill="#e8e8e8" stroke="#333" stroke-width="0.9"/></svg><svg class="a" style="left:1462px;top:368px;" width="30" height="29" viewBox="0 0 30 29"><rect x="1" y="1" width="28" height="27" fill="#fff" stroke="#111" stroke-width="1"/><rect x="1" y="1" width="28" height="4.5" fill="#000"/><rect x="2.2" y="2" width="3" height="2.6" fill="#fff"/><path d="M8 9 L8 24 L14 19 L23 19 L23 13 L14 13 Z" fill="#f0f0f0" stroke="#333" stroke-width="0.9"/><path d="M4 16 H27" stroke="#e06060" stroke-width="0.6" stroke-dasharray="1,1"/></svg><svg class="a" style="left:1462px;top:424.5px;" width="30" height="29" viewBox="0 0 30 29"><rect x="1" y="1" width="28" height="27" fill="#fff" stroke="#111" stroke-width="1"/><rect x="1" y="1" width="28" height="4.5" fill="#000"/><rect x="2.2" y="2" width="3" height="2.6" fill="#fff"/><path d="M4 9 H17 M4 12 H18 M4 15 H17 M4 18 H18" stroke="#666" stroke-width="0.6"/><rect x="3" y="22" width="24" height="4" fill="none" stroke="#333" stroke-width="0.7"/><path d="M5 24 H25" stroke="#444" stroke-width="0.6"/></svg><svg class="a" style="left:1462px;top:472px;" width="30" height="29" viewBox="0 0 30 29"><rect x="1" y="1" width="28" height="27" fill="#fff" stroke="#111" stroke-width="1"/><rect x="1" y="1" width="28" height="4.5" fill="#000"/><rect x="2.2" y="2" width="3" height="2.6" fill="#fff"/><rect x="8" y="9" width="14" height="17" fill="#c8862a" stroke="#7a5010" stroke-width="0.8"/><rect x="10" y="11" width="10" height="13" fill="#f4f4f4"/><rect x="12" y="8" width="6" height="3" fill="#999"/></svg><div class="a" style="left:0;top:797px;width:1500px;height:47px;background:#dcdcdc;border-top:1px solid #cfcfcf"></div><div class="a" style="left:2.2px;top:806.7px;font-size:9.6px;line-height:9.6px;color:#1a1a1a;white-space:nowrap;letter-spacing:0.45px">239.9625,10.4983</div><div class="a" style="left:2.2px;top:826.9px;font-size:9.6px;line-height:9.6px;color:#1a1a1a;white-space:nowrap;letter-spacing:0.45px">@239.9625,10.4983</div><div class="a" style="left:253px;top:802px;width:1px;height:40px;background:#8a8a8a"></div><div class="a" style="left:256.4px;top:806.7px;font-size:9.6px;line-height:9.6px;color:#1a1a1a;white-space:nowrap;letter-spacing:0.45px">240.1921&lt;3°</div><div class="a" style="left:256.4px;top:826.9px;font-size:9.6px;line-height:9.6px;color:#1a1a1a;white-space:nowrap;letter-spacing:0.45px">@240.1921&lt;3°</div><div class="a" style="left:506.5px;top:818.5px;width:6px;height:6px;border-radius:50%;background:#c6c6c6"></div><div class="a" style="left:940px;top:818.5px;width:6px;height:6px;border-radius:50%;background:#c6c6c6"></div><div class="a" style="left:1269.5px;top:818.5px;width:6px;height:6px;border-radius:50%;background:#c6c6c6"></div><div class="a" style="left:398.5px;top:812.3px;width:300px;text-align:right;font-size:9.6px;line-height:9.6px;color:#1a1a1a;white-space:nowrap;letter-spacing:0.3px">Object of gebied selecteren</div><div class="a" style="left:398.5px;top:823.3px;width:300px;text-align:right;font-size:9.6px;line-height:9.6px;color:#1a1a1a;white-space:nowrap;letter-spacing:0.3px">Object of referentiepunt verplaatsen</div><svg class="a" style="left:716px;top:805px;" width="20" height="32" viewBox="0 0 20 32"><rect x="1.5" y="1" width="17" height="29.5" rx="8.5" fill="#fff" stroke="#444" stroke-width="0.9"/><path d="M1.6 14.5 Q10 12.5 18.4 14.5" fill="none" stroke="#444" stroke-width="0.9"/><path d="M10 1 V13.3" stroke="#444" stroke-width="0.8"/><rect x="8.6" y="3.2" width="2.8" height="6.5" rx="1.4" fill="#fff" stroke="#444" stroke-width="0.8"/></svg><div class="a" style="left:949px;top:812.3px;font-size:9.6px;line-height:9.6px;color:#1a1a1a;white-space:nowrap;letter-spacing:0.3px">Geselecteerde objecten:</div><div class="a" style="left:949px;top:823.3px;font-size:9.6px;line-height:9.6px;color:#1a1a1a;white-space:nowrap;letter-spacing:0.3px">149 objecten op laag "0".</div></div></body></html>
